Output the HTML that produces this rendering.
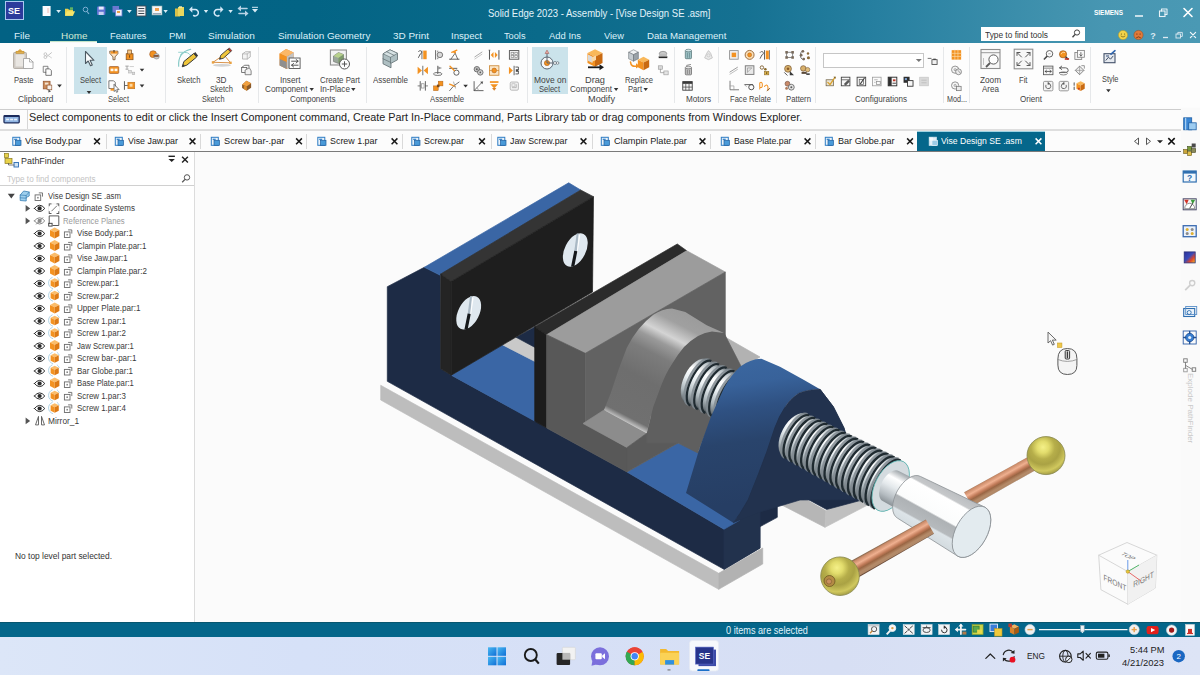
<!DOCTYPE html>
<html lang="en"><head><meta charset="utf-8"><title>Solid Edge 2023 - Assembly - [Vise Design SE .asm]</title>
<style>
html,body{margin:0;padding:0;}
body{width:1200px;height:675px;overflow:hidden;position:relative;background:#fbfbfb;font-family:"Liberation Sans",sans-serif;}
.t{position:absolute;white-space:nowrap;transform-origin:0 50%;display:block;}
.r{position:absolute;}
svg{position:absolute;left:0;top:0;overflow:visible;}
</style></head><body>
<div class="r" style="left:0px;top:0px;width:1200px;height:43px;background:linear-gradient(90deg,#026284 0%,#036485 26%,#0a6a8a 45%,#157192 62%,#267fa0 73%,#4192ae 88%,#4796b2 92%,#4a99b4 100%);"></div>
<div class="r" style="left:0px;top:43px;width:1200px;height:64px;background:#fdfdfd;"></div>
<div class="r" style="left:0px;top:107px;width:1200px;height:24px;background:#fcfcfc;"></div>
<div class="r" style="left:0px;top:108.6px;width:1200px;height:1.8000000000000114px;background:#cdcdcd;"></div>
<div class="r" style="left:27px;top:110.4px;width:1px;height:18.19999999999999px;background:#d6d6d6;"></div>
<div class="r" style="left:0px;top:128.6px;width:1200px;height:2.0px;background:#dedede;"></div>
<div class="r" style="left:0px;top:130.6px;width:1181px;height:21.400000000000006px;background:#fcfcfc;"></div>
<div class="r" style="left:0px;top:151px;width:1181px;height:1px;background:#7a7a7a;"></div>
<div class="r" style="left:1181px;top:108px;width:19px;height:513.5px;background:#fafafa;"></div>
<div class="r" style="left:0px;top:152px;width:195px;height:469.5px;background:#ffffff;"></div>
<div class="r" style="left:194px;top:152px;width:1px;height:469.5px;background:#dcdcdc;"></div>
<div class="r" style="left:0px;top:185px;width:194px;height:1px;background:#d0d0d0;"></div>
<div class="r" style="left:0px;top:621.5px;width:1200px;height:15.799999999999955px;background:#04668a;"></div>
<div class="r" style="left:0px;top:621.5px;width:1200px;height:1.0px;background:#07566f;"></div>
<div class="r" style="left:0px;top:637.3px;width:1200px;height:37.700000000000045px;background:linear-gradient(90deg,#dce6f8 0%,#d6e1f8 25%,#d7dff4 70%,#dde4f6 100%);"></div>
<div class="r" style="left:5px;top:1px;width:19px;height:19px;background:#2c3b9c;border:1px solid #a9c8f0;box-sizing:border-box;"></div>
<span class="t" style="left:8.0px;top:5.5px;font-size:9px;line-height:11px;color:#fff;font-weight:bold;transform:scaleX(0.999);">SE</span>
<span class="t" style="left:488.0px;top:6.5px;font-size:11px;line-height:13px;color:#e2f3fa;transform:scaleX(0.867);">Solid Edge 2023 - Assembly - [Vise Design SE .asm]</span>
<span class="t" style="left:1094.0px;top:8.5px;font-size:7px;line-height:8px;color:#fff;font-weight:bold;transform:scaleX(0.920);">SIEMENS</span>
<span class="t" style="left:14.0px;top:29.7px;font-size:9.7px;line-height:12px;color:#dcf0f9;transform:scaleX(1.024);">File</span>
<span class="t" style="left:61.0px;top:29.7px;font-size:9.7px;line-height:12px;color:#d3ecd4;transform:scaleX(1.024);">Home</span>
<span class="t" style="left:109.5px;top:29.7px;font-size:9.7px;line-height:12px;color:#dcf0f9;transform:scaleX(0.954);">Features</span>
<span class="t" style="left:169.0px;top:29.7px;font-size:9.7px;line-height:12px;color:#dcf0f9;transform:scaleX(0.986);">PMI</span>
<span class="t" style="left:208.0px;top:29.7px;font-size:9.7px;line-height:12px;color:#dcf0f9;transform:scaleX(1.038);">Simulation</span>
<span class="t" style="left:277.5px;top:29.7px;font-size:9.7px;line-height:12px;color:#dcf0f9;transform:scaleX(1.021);">Simulation Geometry</span>
<span class="t" style="left:392.5px;top:29.7px;font-size:9.7px;line-height:12px;color:#dcf0f9;transform:scaleX(1.027);">3D Print</span>
<span class="t" style="left:450.5px;top:29.7px;font-size:9.7px;line-height:12px;color:#dcf0f9;transform:scaleX(0.991);">Inspect</span>
<span class="t" style="left:504.0px;top:29.7px;font-size:9.7px;line-height:12px;color:#dcf0f9;transform:scaleX(0.950);">Tools</span>
<span class="t" style="left:548.5px;top:29.7px;font-size:9.7px;line-height:12px;color:#dcf0f9;transform:scaleX(0.973);">Add Ins</span>
<span class="t" style="left:604.0px;top:29.7px;font-size:9.7px;line-height:12px;color:#dcf0f9;transform:scaleX(0.959);">View</span>
<span class="t" style="left:647.0px;top:29.7px;font-size:9.7px;line-height:12px;color:#dcf0f9;transform:scaleX(0.996);">Data Management</span>
<div class="r" style="left:50px;top:41px;width:47px;height:1px;background:#c4e4c8;"></div>
<div class="r" style="left:50px;top:42px;width:47px;height:1px;background:#f8f9fa;"></div>
<div class="r" style="left:981px;top:27px;width:104px;height:14px;background:#ffffff;"></div>
<span class="t" style="left:984.5px;top:29.5px;font-size:8.5px;line-height:10px;color:#333;transform:scaleX(0.980);">Type to find tools</span>
<div class="r" style="left:74px;top:47px;width:33px;height:47px;background:#cbe3eb;"></div>
<div class="r" style="left:532px;top:47px;width:36px;height:47px;background:#cbe3eb;"></div>
<span class="t" style="left:13.5px;top:75.0px;font-size:8.6px;line-height:10px;color:#444444;transform:scaleX(0.887);">Paste</span>
<span class="t" style="left:18.0px;top:94.0px;font-size:8.6px;line-height:10px;color:#444444;transform:scaleX(0.964);">Clipboard</span>
<span class="t" style="left:79.5px;top:75.0px;font-size:8.6px;line-height:10px;color:#444444;transform:scaleX(0.879);">Select</span>
<span class="t" style="left:108.0px;top:94.0px;font-size:8.6px;line-height:10px;color:#444444;transform:scaleX(0.879);">Select</span>
<span class="t" style="left:177.0px;top:75.0px;font-size:8.6px;line-height:10px;color:#444444;transform:scaleX(0.894);">Sketch</span>
<span class="t" style="left:216.0px;top:75.0px;font-size:8.6px;line-height:10px;color:#444444;transform:scaleX(0.955);">3D</span>
<span class="t" style="left:210.0px;top:84.0px;font-size:8.6px;line-height:10px;color:#444444;transform:scaleX(0.875);">Sketch</span>
<span class="t" style="left:201.5px;top:94.0px;font-size:8.6px;line-height:10px;color:#444444;transform:scaleX(0.856);">Sketch</span>
<span class="t" style="left:279.5px;top:75.0px;font-size:8.6px;line-height:10px;color:#444444;transform:scaleX(0.953);">Insert</span>
<span class="t" style="left:265.1px;top:84.0px;font-size:8.6px;line-height:10px;color:#444444;transform:scaleX(0.956);">Component</span>
<span class="t" style="left:320.0px;top:75.0px;font-size:8.6px;line-height:10px;color:#444444;transform:scaleX(0.910);">Create Part</span>
<span class="t" style="left:320.0px;top:84.0px;font-size:8.6px;line-height:10px;color:#444444;transform:scaleX(0.951);">In-Place</span>
<span class="t" style="left:289.5px;top:94.0px;font-size:8.6px;line-height:10px;color:#444444;transform:scaleX(0.933);">Components</span>
<span class="t" style="left:373.0px;top:75.0px;font-size:8.6px;line-height:10px;color:#444444;transform:scaleX(0.927);">Assemble</span>
<span class="t" style="left:430.0px;top:94.0px;font-size:8.6px;line-height:10px;color:#444444;transform:scaleX(0.900);">Assemble</span>
<span class="t" style="left:534.0px;top:75.0px;font-size:8.6px;line-height:10px;color:#444444;transform:scaleX(0.985);">Move on</span>
<span class="t" style="left:539.0px;top:84.0px;font-size:8.6px;line-height:10px;color:#444444;transform:scaleX(0.879);">Select</span>
<span class="t" style="left:585.0px;top:75.0px;font-size:8.6px;line-height:10px;color:#444444;transform:scaleX(1.073);">Drag</span>
<span class="t" style="left:570.3px;top:84.0px;font-size:8.6px;line-height:10px;color:#444444;transform:scaleX(0.945);">Component</span>
<span class="t" style="left:588.0px;top:94.0px;font-size:8.6px;line-height:10px;color:#444444;transform:scaleX(1.066);">Modify</span>
<span class="t" style="left:624.5px;top:75.0px;font-size:8.6px;line-height:10px;color:#444444;transform:scaleX(0.887);">Replace</span>
<span class="t" style="left:628.0px;top:84.0px;font-size:8.6px;line-height:10px;color:#444444;transform:scaleX(0.888);">Part</span>
<span class="t" style="left:686.0px;top:94.0px;font-size:8.6px;line-height:10px;color:#444444;transform:scaleX(0.951);">Motors</span>
<span class="t" style="left:729.5px;top:94.0px;font-size:8.6px;line-height:10px;color:#444444;transform:scaleX(0.884);">Face Relate</span>
<span class="t" style="left:785.5px;top:94.0px;font-size:8.6px;line-height:10px;color:#444444;transform:scaleX(0.902);">Pattern</span>
<span class="t" style="left:855.0px;top:94.0px;font-size:8.6px;line-height:10px;color:#444444;transform:scaleX(0.938);">Configurations</span>
<span class="t" style="left:947.0px;top:94.0px;font-size:8.6px;line-height:10px;color:#444444;transform:scaleX(0.837);">Mod...</span>
<span class="t" style="left:980.0px;top:75.0px;font-size:8.6px;line-height:10px;color:#444444;transform:scaleX(0.955);">Zoom</span>
<span class="t" style="left:982.0px;top:84.0px;font-size:8.6px;line-height:10px;color:#444444;transform:scaleX(0.936);">Area</span>
<span class="t" style="left:1019.0px;top:75.0px;font-size:8.6px;line-height:10px;color:#444444;transform:scaleX(0.890);">Fit</span>
<span class="t" style="left:1019.5px;top:94.0px;font-size:8.6px;line-height:10px;color:#444444;transform:scaleX(0.939);">Orient</span>
<span class="t" style="left:1101.5px;top:74.0px;font-size:8.6px;line-height:10px;color:#444444;transform:scaleX(0.863);">Style</span>
<div class="r" style="left:66px;top:47px;width:1px;height:56px;background:#e6e8ea;"></div>
<div class="r" style="left:165px;top:47px;width:1px;height:56px;background:#e6e8ea;"></div>
<div class="r" style="left:258px;top:47px;width:1px;height:56px;background:#e6e8ea;"></div>
<div class="r" style="left:366px;top:47px;width:1px;height:56px;background:#e6e8ea;"></div>
<div class="r" style="left:527px;top:47px;width:1px;height:56px;background:#e6e8ea;"></div>
<div class="r" style="left:674px;top:47px;width:1px;height:56px;background:#e6e8ea;"></div>
<div class="r" style="left:718px;top:47px;width:1px;height:56px;background:#e6e8ea;"></div>
<div class="r" style="left:776px;top:47px;width:1px;height:56px;background:#e6e8ea;"></div>
<div class="r" style="left:815px;top:47px;width:1px;height:56px;background:#e6e8ea;"></div>
<div class="r" style="left:943px;top:47px;width:1px;height:56px;background:#e6e8ea;"></div>
<div class="r" style="left:969px;top:47px;width:1px;height:56px;background:#e6e8ea;"></div>
<div class="r" style="left:1090px;top:47px;width:1px;height:56px;background:#e6e8ea;"></div>
<div class="r" style="left:823px;top:53px;width:101px;height:15px;background:#ffffff;border:1px solid #c6c6c6;box-sizing:border-box;"></div>
<span class="t" style="left:28.5px;top:111.1px;font-size:10.9px;line-height:13px;color:#222;transform:scaleX(0.991);">Select components to edit or click the Insert Component command, Create Part In-Place command, Parts Library tab or drag components from Windows Explorer.</span>
<div class="r" style="left:917px;top:131.4px;width:127.5px;height:20.0px;background:#05678b;"></div>
<div class="r" style="left:917px;top:131.4px;width:127.5px;height:0.799999999999983px;background:#9fd3e2;"></div>
<span class="t" style="left:25.0px;top:136.0px;font-size:9.2px;line-height:11px;color:#222;transform:scaleX(1.001);">Vise Body.par</span>
<span class="t" style="left:127.5px;top:136.0px;font-size:9.2px;line-height:11px;color:#222;transform:scaleX(0.962);">Vise Jaw.par</span>
<span class="t" style="left:223.5px;top:136.0px;font-size:9.2px;line-height:11px;color:#222;transform:scaleX(1.003);">Screw bar-.par</span>
<span class="t" style="left:330.0px;top:136.0px;font-size:9.2px;line-height:11px;color:#222;transform:scaleX(0.968);">Screw 1.par</span>
<span class="t" style="left:424.0px;top:136.0px;font-size:9.2px;line-height:11px;color:#222;transform:scaleX(0.978);">Screw.par</span>
<span class="t" style="left:510.0px;top:136.0px;font-size:9.2px;line-height:11px;color:#222;transform:scaleX(0.961);">Jaw Screw.par</span>
<span class="t" style="left:613.5px;top:136.0px;font-size:9.2px;line-height:11px;color:#222;transform:scaleX(0.998);">Clampin Plate.par</span>
<span class="t" style="left:733.5px;top:136.0px;font-size:9.2px;line-height:11px;color:#222;transform:scaleX(0.953);">Base Plate.par</span>
<span class="t" style="left:837.5px;top:136.0px;font-size:9.2px;line-height:11px;color:#222;transform:scaleX(0.987);">Bar Globe.par</span>
<span class="t" style="left:941.0px;top:136.0px;font-size:9.2px;line-height:11px;color:#fff;transform:scaleX(0.939);">Vise Design SE .asm</span>
<div class="r" style="left:106px;top:134px;width:1px;height:15px;background:#d9d9d9;"></div>
<div class="r" style="left:200px;top:134px;width:1px;height:15px;background:#d9d9d9;"></div>
<div class="r" style="left:306px;top:134px;width:1px;height:15px;background:#d9d9d9;"></div>
<div class="r" style="left:402px;top:134px;width:1px;height:15px;background:#d9d9d9;"></div>
<div class="r" style="left:491px;top:134px;width:1px;height:15px;background:#d9d9d9;"></div>
<div class="r" style="left:592px;top:134px;width:1px;height:15px;background:#d9d9d9;"></div>
<div class="r" style="left:710px;top:134px;width:1px;height:15px;background:#d9d9d9;"></div>
<div class="r" style="left:815px;top:134px;width:1px;height:15px;background:#d9d9d9;"></div>
<span class="t" style="left:21.3px;top:154.9px;font-size:9.5px;line-height:11px;color:#333;transform:scaleX(0.938);">PathFinder</span>
<span class="t" style="left:7.0px;top:173.7px;font-size:8.5px;line-height:10px;color:#c4c4c4;transform:scaleX(0.956);">Type to find components</span>
<span class="t" style="left:47.5px;top:191.0px;font-size:8.3px;line-height:10px;color:#3a3a3a;transform:scaleX(0.937);">Vise Design SE .asm</span>
<span class="t" style="left:62.7px;top:203.4px;font-size:8.3px;line-height:10px;color:#3a3a3a;transform:scaleX(0.963);">Coordinate Systems</span>
<span class="t" style="left:62.7px;top:215.9px;font-size:8.5px;line-height:10px;color:#9a9a9a;transform:scaleX(0.913);">Reference Planes</span>
<span class="t" style="left:76.9px;top:228.3px;font-size:8.3px;line-height:10px;color:#3a3a3a;transform:scaleX(0.968);">Vise Body.par:1</span>
<span class="t" style="left:76.9px;top:240.8px;font-size:8.3px;line-height:10px;color:#3a3a3a;transform:scaleX(0.951);">Clampin Plate.par:1</span>
<span class="t" style="left:76.9px;top:253.3px;font-size:8.3px;line-height:10px;color:#3a3a3a;transform:scaleX(0.940);">Vise Jaw.par:1</span>
<span class="t" style="left:76.9px;top:265.8px;font-size:8.3px;line-height:10px;color:#3a3a3a;transform:scaleX(0.958);">Clampin Plate.par:2</span>
<span class="t" style="left:76.9px;top:278.3px;font-size:8.3px;line-height:10px;color:#3a3a3a;transform:scaleX(0.954);">Screw.par:1</span>
<span class="t" style="left:76.9px;top:290.8px;font-size:8.3px;line-height:10px;color:#3a3a3a;transform:scaleX(0.954);">Screw.par:2</span>
<span class="t" style="left:76.9px;top:303.3px;font-size:8.3px;line-height:10px;color:#3a3a3a;transform:scaleX(0.976);">Upper Plate.par:1</span>
<span class="t" style="left:76.9px;top:315.8px;font-size:8.3px;line-height:10px;color:#3a3a3a;transform:scaleX(0.955);">Screw 1.par:1</span>
<span class="t" style="left:76.9px;top:328.3px;font-size:8.3px;line-height:10px;color:#3a3a3a;transform:scaleX(0.955);">Screw 1.par:2</span>
<span class="t" style="left:76.9px;top:340.8px;font-size:8.3px;line-height:10px;color:#3a3a3a;transform:scaleX(0.934);">Jaw Screw.par:1</span>
<span class="t" style="left:76.9px;top:353.3px;font-size:8.3px;line-height:10px;color:#3a3a3a;transform:scaleX(0.970);">Screw bar-.par:1</span>
<span class="t" style="left:76.9px;top:365.8px;font-size:8.3px;line-height:10px;color:#3a3a3a;transform:scaleX(0.956);">Bar Globe.par:1</span>
<span class="t" style="left:76.9px;top:378.3px;font-size:8.3px;line-height:10px;color:#3a3a3a;transform:scaleX(0.927);">Base Plate.par:1</span>
<span class="t" style="left:76.9px;top:390.8px;font-size:8.3px;line-height:10px;color:#3a3a3a;transform:scaleX(0.955);">Screw 1.par:3</span>
<span class="t" style="left:76.9px;top:403.3px;font-size:8.3px;line-height:10px;color:#3a3a3a;transform:scaleX(0.955);">Screw 1.par:4</span>
<span class="t" style="left:48.0px;top:415.9px;font-size:8.3px;line-height:10px;color:#3a3a3a;transform:scaleX(1.007);">Mirror_1</span>
<span class="t" style="left:15.0px;top:550.5px;font-size:8.5px;line-height:10px;color:#333;transform:scaleX(0.987);">No top level part selected.</span>
<span class="t" style="left:725.5px;top:625.2px;font-size:10.2px;line-height:12px;color:#e0f3fa;transform:scaleX(0.898);">0 items are selected</span>
<span class="t" style="left:1027.0px;top:651.0px;font-size:9px;line-height:11px;color:#222;transform:scaleX(0.923);">ENG</span>
<span class="t" style="left:1129.5px;top:643.5px;font-size:9.5px;line-height:11px;color:#222;transform:scaleX(0.975);">5:44 PM</span>
<span class="t" style="left:1122.0px;top:656.5px;font-size:9.5px;line-height:11px;color:#222;transform:scaleX(0.994);">4/21/2023</span>
<span class="t" style="left:1190px;top:373px;font-size:8px;line-height:10px;color:#c9c9c9;transform-origin:0 0;transform:rotate(90deg) translate(0,-50%);">Explode PathFinder</span>
<svg width="1200" height="675" viewBox="0 0 1200 675"><defs>
<linearGradient id="gThread" gradientUnits="userSpaceOnUse" x1="0" y1="-1" x2="0" y2="1">
<stop offset="0" stop-color="#2a2d30"/><stop offset="0.12" stop-color="#9aa3a8"/><stop offset="0.35" stop-color="#f4f7f8"/>
<stop offset="0.6" stop-color="#c9d0d3"/><stop offset="0.85" stop-color="#7c8489"/><stop offset="1" stop-color="#2a2d30"/></linearGradient>
<linearGradient id="gBoss" gradientUnits="userSpaceOnUse" x1="620" y1="420" x2="682" y2="300">
<stop offset="0" stop-color="#cfcfcf"/><stop offset="0.05" stop-color="#707070"/><stop offset="0.35" stop-color="#6e6e6e"/><stop offset="0.55" stop-color="#7c7c7c"/><stop offset="0.65" stop-color="#9a9a9a"/><stop offset="0.72" stop-color="#d4d4d4"/><stop offset="0.83" stop-color="#a0a0a0"/><stop offset="1" stop-color="#989898"/></linearGradient>
<linearGradient id="gBlock" gradientUnits="userSpaceOnUse" x1="740" y1="358" x2="760" y2="500">
<stop offset="0" stop-color="#3b67a0"/><stop offset="0.18" stop-color="#38629a"/><stop offset="0.35" stop-color="#2f5182"/><stop offset="0.58" stop-color="#29446c"/><stop offset="1" stop-color="#263e64"/></linearGradient>
<linearGradient id="gCopperA" gradientUnits="userSpaceOnUse" x1="0" y1="-1" x2="0" y2="1">
<stop offset="0" stop-color="#8a4a2c"/><stop offset="0.3" stop-color="#e39a72"/><stop offset="0.55" stop-color="#c9754a"/><stop offset="1" stop-color="#7d3f25"/></linearGradient>
<radialGradient id="gGold" cx="0.42" cy="0.28" r="0.78"><stop offset="0" stop-color="#f4f088"/><stop offset="0.2" stop-color="#e2dc6c"/><stop offset="0.4" stop-color="#b6ae4a"/><stop offset="0.58" stop-color="#aaa244"/><stop offset="0.8" stop-color="#d0c85e"/><stop offset="1" stop-color="#8e8838"/></radialGradient>
<linearGradient id="gHead" gradientUnits="userSpaceOnUse" x1="945" y1="480" x2="925" y2="540">
<stop offset="0" stop-color="#b8bcc0"/><stop offset="0.25" stop-color="#fbfcfc"/><stop offset="0.5" stop-color="#d5dadd"/><stop offset="0.8" stop-color="#e9eef0"/><stop offset="1" stop-color="#aeb4b8"/></linearGradient>
<linearGradient id="gShaft" gradientUnits="userSpaceOnUse" x1="905" y1="470" x2="885" y2="510">
<stop offset="0" stop-color="#a9aeb2"/><stop offset="0.3" stop-color="#ffffff"/><stop offset="0.6" stop-color="#d0d5d8"/><stop offset="1" stop-color="#8e9498"/></linearGradient>
</defs>
<polygon points="380.7,385.3 387.3,381.3 724.0,569.3 762.7,548.0 762.7,549.0 718.7,573.3" fill="#fbfbfb"  stroke="#fbfbfb" stroke-width="0.7" stroke-linejoin="round"/>
<polygon points="380.7,385.3 718.7,573.3 718.7,589.3 380.7,400.0" fill="#bdbdbd"  stroke="#bdbdbd" stroke-width="0.7" stroke-linejoin="round"/>
<polygon points="718.7,573.3 762.7,548.0 762.7,564.0 718.7,589.3" fill="#b2b2b2"  stroke="#b2b2b2" stroke-width="0.7" stroke-linejoin="round"/>
<polygon points="776.0,498.0 792.0,490.2 826.0,509.5 825.0,527.3 776.0,502.0" fill="#b6b6b6"  stroke="#b6b6b6" stroke-width="0.7" stroke-linejoin="round"/>
<polygon points="826.0,509.5 882.0,482.5 882.0,497.5 825.0,527.3" fill="#c0c0c0"  stroke="#c0c0c0" stroke-width="0.7" stroke-linejoin="round"/>
<path d="M792,490.4 L826,509.7 L882,482.7" fill="none" stroke="#f6f6f6" stroke-width="1.3"/>
<polygon points="387.3,286.7 424.3,267.3 440.3,275.3 440.7,368.8 451.3,375.2 534.0,420.6 546.7,428.0 627.0,472.0 724.0,529.3 740.0,513.0 761.0,420.0 820.0,389.3 833.3,406.7 844.0,428.0 864.0,499.5 826.7,509.5 792.0,490.7 777.3,500.0 777.3,517.3 760.0,526.7 760.0,548.0 724.0,569.3 387.3,381.3" fill="#1d2b45"  stroke="#1d2b45" stroke-width="0.7" stroke-linejoin="round"/>
<polygon points="724.0,529.3 733.3,522.7 760.0,510.0 760.0,548.0 724.0,569.3" fill="#22324d"  stroke="#22324d" stroke-width="0.7" stroke-linejoin="round"/>
<polygon points="424.3,267.3 568.7,182.8 580.7,190.0 440.3,275.3" fill="#3a66a5"  stroke="#3a66a5" stroke-width="0.7" stroke-linejoin="round"/>
<polygon points="451.3,375.2 502.5,344.8 535.5,361.8 535.5,421.5" fill="#3a66a5"  stroke="#3a66a5" stroke-width="0.7" stroke-linejoin="round"/>
<polygon points="516.1,337.3 535.5,347.7 535.5,361.8 502.5,344.8" fill="#c9c9c9"  stroke="#c9c9c9" stroke-width="0.7" stroke-linejoin="round"/>
<polygon points="516.1,337.3 535.5,326.5 535.5,347.7" fill="#1d2b45"  stroke="#1d2b45" stroke-width="0.7" stroke-linejoin="round"/>
<polygon points="440.7,274.0 580.7,190.0 593.5,196.7 451.3,281.5" fill="#343434"  stroke="#343434" stroke-width="0.7" stroke-linejoin="round"/>
<polygon points="440.7,274.0 451.3,281.5 451.3,375.2 440.7,368.8" fill="#242424"  stroke="#242424" stroke-width="0.7" stroke-linejoin="round"/>
<polygon points="451.3,281.5 593.5,196.7 592.5,292.0 451.3,375.2" fill="#1e1e1e"  stroke="#1e1e1e" stroke-width="0.7" stroke-linejoin="round"/>
<g transform="translate(468.7,312.7)"><ellipse rx="10.5" ry="18" transform="rotate(27)" fill="#dfe8ef"/><g transform="rotate(9)"><path d="M-1.2,-16.5 L0.6,-16.8 L1.8,2 L-0.8,2 Z" fill="#a9b8c4"/><path d="M1.2,-16 L2.6,-15 L2.6,2 L1.8,2 Z" fill="#ffffff"/><path d="M-0.9,1 L2.2,1 L1.6,16.5 L-1.6,17 Z" fill="#15181b"/></g></g>
<g transform="translate(575.3,250)"><ellipse rx="10.5" ry="18" transform="rotate(27)" fill="#dfe8ef"/><g transform="rotate(9)"><path d="M-1.2,-16.5 L0.6,-16.8 L1.8,2 L-0.8,2 Z" fill="#a9b8c4"/><path d="M1.2,-16 L2.6,-15 L2.6,2 L1.8,2 Z" fill="#ffffff"/><path d="M-0.9,1 L2.2,1 L1.6,16.5 L-1.6,17 Z" fill="#15181b"/></g></g>
<polygon points="627.0,472.0 678.0,443.0 702.0,453.0 700.0,490.0 740.0,520.0 724.0,529.3" fill="#3a66a5"  stroke="#3a66a5" stroke-width="0.7" stroke-linejoin="round"/>
<polygon points="725.0,337.0 760.0,357.0 748.0,364.0 741.3,367.5 725.0,346.0" fill="#b2b2b2"  stroke="#b2b2b2" stroke-width="0.7" stroke-linejoin="round"/>
<polygon points="534.7,326.7 677.3,244.0 686.7,250.7 546.7,334.7" fill="#2b2b2b"  stroke="#2b2b2b" stroke-width="0.7" stroke-linejoin="round"/>
<polygon points="534.7,326.7 546.7,334.7 546.7,428.0 534.7,421.3" fill="#1c1c1c"  stroke="#1c1c1c" stroke-width="0.7" stroke-linejoin="round"/>
<polygon points="546.7,334.7 686.7,250.7 725.3,272.0 585.3,353.3" fill="#9c9c9c"  stroke="#9c9c9c" stroke-width="0.7" stroke-linejoin="round"/>
<polygon points="546.7,334.7 585.3,353.3 585.3,424.0 627.0,447.5 627.0,472.0 546.7,428.0" fill="#585858"  stroke="#585858" stroke-width="0.7" stroke-linejoin="round"/>
<polygon points="585.3,353.3 725.3,272.0 725.3,345.0 700.0,420.0 605.3,410.7 585.3,424.0" fill="#626262"  stroke="#626262" stroke-width="0.7" stroke-linejoin="round"/>
<polygon points="583.0,423.5 604.0,410.0 646.7,433.3 627.0,447.5" fill="#8c8c8c"  stroke="#8c8c8c" stroke-width="0.7" stroke-linejoin="round"/>
<polygon points="627.0,447.5 646.7,433.3 678.0,443.0 627.0,472.0" fill="#5a5a5a"  stroke="#5a5a5a" stroke-width="0.7" stroke-linejoin="round"/>
<path d="M646.7,433.3 L653.3,406.7 L661.3,385.3 Q666,373 672,364 Q678,354 684,347 Q691,340 698,336 Q705,332 712,331.5 L724,333 L741.3,366.7 L724,388 L700,446.7 L698,453 L678,443 L646.7,443 Z" fill="#5f5f5f"  stroke="#5f5f5f" stroke-width="0.7" stroke-linejoin="round"/>
<path d="M604,410 L610.7,393.3 L618.7,369.3 L626.7,348 Q637,327 653.3,314.7 Q662,309 672,308.5 L685.3,312 L706.7,325.3 L724,333 L712,331.5 Q705,332 698,336 Q691,340 684,347 Q678,354 672,364 Q666,373 661.3,385.3 L653.3,406.7 L646.7,433.3 Z" fill="url(#gBoss)" />
<defs><linearGradient id="gc1" gradientUnits="userSpaceOnUse" x1="0" y1="-25.5" x2="0" y2="25.5"><stop offset="0" stop-color="#4c5358"/><stop offset="0.1" stop-color="#b9c2c7"/><stop offset="0.3" stop-color="#ffffff"/><stop offset="0.5" stop-color="#e9eff2"/><stop offset="0.75" stop-color="#aeb8bd"/><stop offset="0.92" stop-color="#6f787d"/><stop offset="1" stop-color="#3c4246"/></linearGradient></defs>
<g transform="translate(697.0,381.5) rotate(25.35)">
<path d="M0,-24.5 L42.0,-25.5 A14.3,25.5 0 0 1 42.0,25.5 L0,24.5 A13.7,24.5 0 0 1 0,-24.5 Z" fill="url(#gc1)" />
<path d="M1.9,-24.6 A10.3,24.6 0 0 0 1.9,24.6" fill="none" stroke="#808990" stroke-opacity="0.85" stroke-width="2.8"/>
<path d="M4.2,-24.6 A10.3,24.6 0 0 0 4.2,24.6" fill="none" stroke="#1f2a30" stroke-width="2.2"/>
<path d="M10.3,-24.8 A10.4,24.8 0 0 0 10.3,24.8" fill="none" stroke="#808990" stroke-opacity="0.85" stroke-width="2.8"/>
<path d="M12.6,-24.8 A10.4,24.8 0 0 0 12.6,24.8" fill="none" stroke="#1f2a30" stroke-width="2.2"/>
<path d="M18.7,-25.0 A10.5,25.0 0 0 0 18.7,25.0" fill="none" stroke="#808990" stroke-opacity="0.85" stroke-width="2.8"/>
<path d="M21.0,-25.0 A10.5,25.0 0 0 0 21.0,25.0" fill="none" stroke="#1f2a30" stroke-width="2.2"/>
<path d="M27.1,-25.2 A10.6,25.2 0 0 0 27.1,25.2" fill="none" stroke="#808990" stroke-opacity="0.85" stroke-width="2.8"/>
<path d="M29.4,-25.2 A10.6,25.2 0 0 0 29.4,25.2" fill="none" stroke="#1f2a30" stroke-width="2.2"/>
<path d="M35.5,-25.4 A10.7,25.4 0 0 0 35.5,25.4" fill="none" stroke="#808990" stroke-opacity="0.85" stroke-width="2.8"/>
<path d="M37.8,-25.4 A10.7,25.4 0 0 0 37.8,25.4" fill="none" stroke="#1f2a30" stroke-width="2.2"/>
</g>
<path d="M686,493 L700,446.7 L710.7,417.3 L724,388 Q731,375 740,366.7 Q750,359 761.3,358.7 L780,366.7 L804,380 L820,389.3 Q806,390 798.7,393.3 Q790,399 785.3,406.7 Q779,416 774.7,428 L766.7,452 L758.7,473.3 L748,500 L740,513.3 L733.3,522.7 Z" fill="url(#gBlock)" />
<path d="M820,389.3 Q806,390 798.7,393.3 Q790,399 785.3,406.7 Q779,416 774.7,428 L766.7,452 L758.7,473.3 L748,500 L740,513.3 L733.3,522.7 L760,512 L800,500 L864,499.5 L844,428 L833.3,406.7 Z" fill="#22324e"  stroke="#22324e" stroke-width="0.7" stroke-linejoin="round"/>
<defs><linearGradient id="gc2" gradientUnits="userSpaceOnUse" x1="0" y1="-27.5" x2="0" y2="27.5"><stop offset="0" stop-color="#4c5358"/><stop offset="0.1" stop-color="#b9c2c7"/><stop offset="0.3" stop-color="#ffffff"/><stop offset="0.5" stop-color="#e9eff2"/><stop offset="0.75" stop-color="#aeb8bd"/><stop offset="0.92" stop-color="#6f787d"/><stop offset="1" stop-color="#3c4246"/></linearGradient></defs>
<g transform="translate(795.0,435.5) rotate(27.82)">
<path d="M0,-24.2 L108.2,-27.5 A15.4,27.5 0 0 1 108.2,27.5 L0,24.2 A13.6,24.2 0 0 1 0,-24.2 Z" fill="url(#gc2)" />
<path d="M1.1,-24.3 A10.2,24.3 0 0 0 1.1,24.3" fill="none" stroke="#808990" stroke-opacity="0.85" stroke-width="2.8"/>
<path d="M3.4,-24.3 A10.2,24.3 0 0 0 3.4,24.3" fill="none" stroke="#1f2a30" stroke-width="2.3"/>
<path d="M7.8,-24.5 A10.3,24.5 0 0 0 7.8,24.5" fill="none" stroke="#808990" stroke-opacity="0.85" stroke-width="2.8"/>
<path d="M10.1,-24.5 A10.3,24.5 0 0 0 10.1,24.5" fill="none" stroke="#1f2a30" stroke-width="2.3"/>
<path d="M14.6,-24.7 A10.4,24.7 0 0 0 14.6,24.7" fill="none" stroke="#808990" stroke-opacity="0.85" stroke-width="2.8"/>
<path d="M16.9,-24.7 A10.4,24.7 0 0 0 16.9,24.7" fill="none" stroke="#1f2a30" stroke-width="2.3"/>
<path d="M21.4,-24.9 A10.5,24.9 0 0 0 21.4,24.9" fill="none" stroke="#808990" stroke-opacity="0.85" stroke-width="2.8"/>
<path d="M23.7,-24.9 A10.5,24.9 0 0 0 23.7,24.9" fill="none" stroke="#1f2a30" stroke-width="2.3"/>
<path d="M28.1,-25.1 A10.6,25.1 0 0 0 28.1,25.1" fill="none" stroke="#808990" stroke-opacity="0.85" stroke-width="2.8"/>
<path d="M30.4,-25.1 A10.6,25.1 0 0 0 30.4,25.1" fill="none" stroke="#1f2a30" stroke-width="2.3"/>
<path d="M34.9,-25.3 A10.6,25.3 0 0 0 34.9,25.3" fill="none" stroke="#808990" stroke-opacity="0.85" stroke-width="2.8"/>
<path d="M37.2,-25.3 A10.6,25.3 0 0 0 37.2,25.3" fill="none" stroke="#1f2a30" stroke-width="2.3"/>
<path d="M41.7,-25.5 A10.7,25.5 0 0 0 41.7,25.5" fill="none" stroke="#808990" stroke-opacity="0.85" stroke-width="2.8"/>
<path d="M44.0,-25.5 A10.7,25.5 0 0 0 44.0,25.5" fill="none" stroke="#1f2a30" stroke-width="2.3"/>
<path d="M48.4,-25.7 A10.8,25.7 0 0 0 48.4,25.7" fill="none" stroke="#808990" stroke-opacity="0.85" stroke-width="2.8"/>
<path d="M50.7,-25.7 A10.8,25.7 0 0 0 50.7,25.7" fill="none" stroke="#1f2a30" stroke-width="2.3"/>
<path d="M55.2,-26.0 A10.9,26.0 0 0 0 55.2,26.0" fill="none" stroke="#808990" stroke-opacity="0.85" stroke-width="2.8"/>
<path d="M57.5,-26.0 A10.9,26.0 0 0 0 57.5,26.0" fill="none" stroke="#1f2a30" stroke-width="2.3"/>
<path d="M61.9,-26.2 A11.0,26.2 0 0 0 61.9,26.2" fill="none" stroke="#808990" stroke-opacity="0.85" stroke-width="2.8"/>
<path d="M64.2,-26.2 A11.0,26.2 0 0 0 64.2,26.2" fill="none" stroke="#1f2a30" stroke-width="2.3"/>
<path d="M68.7,-26.4 A11.1,26.4 0 0 0 68.7,26.4" fill="none" stroke="#808990" stroke-opacity="0.85" stroke-width="2.8"/>
<path d="M71.0,-26.4 A11.1,26.4 0 0 0 71.0,26.4" fill="none" stroke="#1f2a30" stroke-width="2.3"/>
<path d="M75.5,-26.6 A11.2,26.6 0 0 0 75.5,26.6" fill="none" stroke="#808990" stroke-opacity="0.85" stroke-width="2.8"/>
<path d="M77.8,-26.6 A11.2,26.6 0 0 0 77.8,26.6" fill="none" stroke="#1f2a30" stroke-width="2.3"/>
<path d="M82.2,-26.8 A11.2,26.8 0 0 0 82.2,26.8" fill="none" stroke="#808990" stroke-opacity="0.85" stroke-width="2.8"/>
<path d="M84.5,-26.8 A11.2,26.8 0 0 0 84.5,26.8" fill="none" stroke="#1f2a30" stroke-width="2.3"/>
<path d="M89.0,-27.0 A11.3,27.0 0 0 0 89.0,27.0" fill="none" stroke="#808990" stroke-opacity="0.85" stroke-width="2.8"/>
<path d="M91.3,-27.0 A11.3,27.0 0 0 0 91.3,27.0" fill="none" stroke="#1f2a30" stroke-width="2.3"/>
<path d="M95.8,-27.2 A11.4,27.2 0 0 0 95.8,27.2" fill="none" stroke="#808990" stroke-opacity="0.85" stroke-width="2.8"/>
<path d="M98.1,-27.2 A11.4,27.2 0 0 0 98.1,27.2" fill="none" stroke="#1f2a30" stroke-width="2.3"/>
<path d="M102.5,-27.4 A11.5,27.4 0 0 0 102.5,27.4" fill="none" stroke="#808990" stroke-opacity="0.85" stroke-width="2.8"/>
<path d="M104.8,-27.4 A11.5,27.4 0 0 0 104.8,27.4" fill="none" stroke="#1f2a30" stroke-width="2.3"/>
<ellipse cx="108.2" cy="0" rx="15.4" ry="27.5" fill="#d4dbdf" stroke="#5fb9b6" stroke-width="0.8"/>
</g>
<defs><linearGradient id="gc3" gradientUnits="userSpaceOnUse" x1="0" y1="-17.5" x2="0" y2="17.5"><stop offset="0" stop-color="#9aa1a6"/><stop offset="0.25" stop-color="#ffffff"/><stop offset="0.5" stop-color="#e4e9ec"/><stop offset="0.8" stop-color="#b4bbc0"/><stop offset="1" stop-color="#8a9196"/></linearGradient></defs>
<g transform="translate(890.7,486.0) rotate(28.36)">
<path d="M0,-17.0 L24.2,-17.5 A9.8,17.5 0 0 1 24.2,17.5 L0,17.0 A9.5,17.0 0 0 1 0,-17.0 Z" fill="url(#gc3)" />
</g>
<defs><linearGradient id="gCu" gradientUnits="userSpaceOnUse" x1="0" y1="-8.5" x2="0" y2="8.5"><stop offset="0" stop-color="#8a6a50"/><stop offset="0.08" stop-color="#c98a68"/><stop offset="0.3" stop-color="#efb090"/><stop offset="0.5" stop-color="#c07a58"/><stop offset="0.62" stop-color="#9a6644"/><stop offset="0.8" stop-color="#b48a68"/><stop offset="0.94" stop-color="#b08868"/><stop offset="1" stop-color="#6a4a38"/></linearGradient></defs>
<g transform="translate(968.0,499.2) rotate(-29.20)"><polygon points="0,-8.0 89.4,-7.5 89.4,7.5 0,8.0" fill="url(#gCu)"/></g>
<circle cx="1046" cy="455.6" r="19" fill="url(#gGold)" stroke="#86864e" stroke-width="0.8"/>
<defs><linearGradient id="gc4" gradientUnits="userSpaceOnUse" x1="0" y1="-28" x2="0" y2="28"><stop offset="0" stop-color="#b9bcbf"/><stop offset="0.16" stop-color="#c6c8ca"/><stop offset="0.19" stop-color="#ffffff"/><stop offset="0.54" stop-color="#fbfcfc"/><stop offset="0.57" stop-color="#aeb2b5"/><stop offset="0.76" stop-color="#b6babd"/><stop offset="0.79" stop-color="#dde4e8"/><stop offset="1" stop-color="#d2dade"/></linearGradient></defs>
<g transform="translate(909.0,497.3) rotate(28.90)">
<path d="M0,-23.8 L71.4,-28.0 A15.7,28.0 0 0 1 71.4,28.0 L0,23.8 A13.3,23.8 0 0 1 0,-23.8 Z" fill="url(#gc4)" stroke="#8a9094" stroke-width="0.7"/>
<ellipse cx="71.4" cy="0" rx="15.7" ry="28.0" fill="#e3ebef" stroke="#8a9094" stroke-width="0.8"/>
</g>
<g transform="translate(840.0,577.5) rotate(-29.54)"><polygon points="0,-9.2 103.4,-8.2 103.4,8.2 0,9.2" fill="url(#gCu)"/></g>
<circle cx="840" cy="576.2" r="19.3" fill="url(#gGold)" stroke="#86864e" stroke-width="0.8"/>
<circle cx="829.5" cy="581" r="5.5" fill="#b48a45" stroke="#6f5a22" stroke-width="0.8"/><circle cx="829" cy="581.5" r="2.6" fill="#c98f5e" stroke="#7a5a2a" stroke-width="0.6"/></svg>
<svg width="1200" height="675" viewBox="0 0 1200 675"><g transform="translate(46.6,11.0) scale(1)"><rect x="-4" y="-5" width="8" height="10" fill="#fbfbfd"/><rect x="0.5" y="-3" width="2" height="5" fill="#f6d9d6"/></g>
<polygon points="56.2,10.0 61.0,10.0 58.6,12.9" fill="#d8ecf6"/>
<g transform="translate(70.0,11.8) scale(1)"><polygon points="-5,4 -5,-3 -2,-3 -1,-2 3,-2 3,4" fill="#e9d24f"/><polygon points="-5,4 -3,-0.5 5,-0.5 3,4" fill="#f5e56b"/><rect x="0" y="-4.5" width="3" height="2.5" fill="#63b463"/></g>
<g transform="translate(86.0,10.5) scale(1)"><circle cx="-0.5" cy="-1" r="2.3" fill="none" stroke="#7fb0d4" stroke-width="1"/><line x1="1" y1="1" x2="3" y2="3.5" stroke="#7fb0d4" stroke-width="1.2"/></g>
<g transform="translate(101.2,10.8) scale(1)"><rect x="-4.2" y="-4.2" width="8.4" height="8.4" fill="#5f72d2" rx="1"/><rect x="-2.5" y="-4.2" width="5" height="3" fill="#e8ecfa"/><rect x="-2.5" y="1" width="5" height="3.2" fill="#c9d1f3"/></g>
<g transform="translate(117.0,11.0) scale(1)"><rect x="-4.5" y="-5" width="6.5" height="6.5" fill="#6a78cf"/><rect x="-1.5" y="-1.5" width="6.5" height="6.5" fill="#eef2fb" stroke="#6a78cf" stroke-width="0.8"/><rect x="0" y="0" width="3" height="2" fill="#e8a04a"/></g>
<polygon points="127.0,10.0 131.8,10.0 129.4,12.9" fill="#d8ecf6"/>
<g transform="translate(141.3,11.0) scale(1)"><rect x="-4.6" y="-5" width="9.2" height="10" fill="#f4f6f8" stroke="#3e4a55" stroke-width="0.9"/><line x1="-3" y1="-2.5" x2="3" y2="-2.5" stroke="#3e4a55" stroke-width="1"/><line x1="-3" y1="0" x2="3" y2="0" stroke="#3e4a55" stroke-width="1"/><line x1="-3" y1="2.5" x2="3" y2="2.5" stroke="#3e4a55" stroke-width="1"/></g>
<g transform="translate(157.0,11.0) scale(1)"><rect x="-5" y="-5" width="10" height="9" fill="#f4f6f8" stroke="#8aa" stroke-width="0.6"/><rect x="-2" y="-3" width="4" height="3" fill="#f0a050"/><rect x="-4" y="2" width="8" height="1.5" fill="#9ab"/></g>
<polygon points="163.4,10.0 167.8,10.0 165.6,12.9" fill="#d8ecf6"/>
<g transform="translate(179.5,11.5) scale(1)"><rect x="-4.5" y="-3" width="5" height="8" fill="#d9c04a"/><rect x="-1.5" y="-4.5" width="6" height="9" fill="#ead75e"/><rect x="-0.5" y="-5.2" width="3" height="1.5" fill="#f5ecb0"/></g>
<g transform="translate(194.6,11.0) scale(1)"><path d="M-3.5,-1.5 L0.5,-1.5 A3.2,3.2 0 1 1 -1,4.5" fill="none" stroke="#d5e9f8" stroke-width="1.5" stroke-linejoin="round" stroke-linecap="round"/><polygon points="-5.5,-1.5 -2.3,-4.8 -2.3,1.8" fill="#d5e9f8"/></g>
<polygon points="203.8,10.0 208.2,10.0 206.0,12.9" fill="#d8ecf6"/>
<g transform="translate(218.0,11.0) scale(1)"><path d="M3.5,-1.5 L-0.5,-1.5 A3.2,3.2 0 1 0 1,4.5" fill="none" stroke="#d5e9f8" stroke-width="1.5" stroke-linejoin="round" stroke-linecap="round"/><polygon points="5.5,-1.5 2.3,-4.8 2.3,1.8" fill="#d5e9f8"/></g>
<polygon points="228.4,10.0 232.8,10.0 230.6,12.9" fill="#d8ecf6"/>
<g transform="translate(243.0,11.0) scale(1)"><path d="M-2,-2.5 L4,-2.5 M-4,2.5 L2,2.5" fill="none" stroke="#b9d3e6" stroke-width="1.6" stroke-linejoin="round" stroke-linecap="round"/><polygon points="-5.5,-2.5 -2,-5.5 -2,0.5" fill="#b9d3e6"/><polygon points="5.5,2.5 2,-0.5 2,5.5" fill="#b9d3e6"/></g>
<g transform="translate(255.0,10.0) scale(1)"><rect x="-3" y="-3.2" width="6" height="1" fill="#d8ecf6"/><polygon points="-3,-1 3,-1 0,2.6" fill="#d8ecf6"/></g>
<line x1="1135" y1="16" x2="1143" y2="16" stroke="#e8f2f7" stroke-width="1.6"/>
<g transform="translate(1163.0,12.5) scale(1)"><rect x="-3.5" y="-1.5" width="5.5" height="5.5" fill="none" stroke="#e8f2f7" stroke-width="1.1"/><path d="M-1.5,-1.5 L-1.5,-3.5 L4,-3.5 L4,2 L2,2" fill="none" stroke="#e8f2f7" stroke-width="1.1" stroke-linejoin="round" stroke-linecap="round"/></g>
<g transform="translate(1188.0,12.5) scale(1)"><path d="M-4,-4 L4,4 M4,-4 L-4,4" fill="none" stroke="#ffffff" stroke-width="1.6" stroke-linejoin="round" stroke-linecap="round"/></g>
<g transform="translate(1076.0,33.5) scale(1)"><circle cx="1" cy="-1" r="2.6" fill="none" stroke="#444" stroke-width="1"/><line x1="-1" y1="1" x2="-3.5" y2="3.8" stroke="#444" stroke-width="1.3"/></g>
<g transform="translate(1123.0,35.0) scale(1)"><circle cx="0" cy="0" r="4.6" fill="#f2d34a" stroke="#b89a20" stroke-width="0.5"/><circle cx="-1.6" cy="-1" r="0.6" fill="#6b5a10"/><circle cx="1.6" cy="-1" r="0.6" fill="#6b5a10"/><path d="M-2,1.2 Q0,3.2 2,1.2" fill="none" stroke="#6b5a10" stroke-width="0.7" stroke-linejoin="round" stroke-linecap="round"/></g>
<g transform="translate(1138.5,35.0) scale(1)"><circle cx="0" cy="0" r="4.6" fill="#e07a3a" stroke="#9c4a1a" stroke-width="0.5"/><circle cx="-1.6" cy="-1" r="0.6" fill="#5a2508"/><circle cx="1.6" cy="-1" r="0.6" fill="#5a2508"/><path d="M-2,2.6 Q0,0.8 2,2.6" fill="none" stroke="#5a2508" stroke-width="0.7" stroke-linejoin="round" stroke-linecap="round"/></g>
<text x="1153" y="38.5" font-family="Liberation Sans,sans-serif" font-size="9" font-weight="bold" fill="#dceaf2" text-anchor="middle">?</text>
<line x1="1163" y1="37.5" x2="1168" y2="37.5" stroke="#dceaf2" stroke-width="1.3"/>
<g transform="translate(1179.0,35.0) scale(1)"><rect x="-3" y="-1" width="4.5" height="4" fill="none" stroke="#dceaf2" stroke-width="0.9"/><path d="M-1.2,-1 L-1.2,-2.6 L3.3,-2.6 L3.3,1.4 L1.5,1.4" fill="none" stroke="#dceaf2" stroke-width="0.9" stroke-linejoin="round" stroke-linecap="round"/></g>
<g transform="translate(1193.0,35.0) scale(1)"><path d="M-2.6,-2.6 L2.6,2.6 M2.6,-2.6 L-2.6,2.6" fill="none" stroke="#f2f8fb" stroke-width="1.2" stroke-linejoin="round" stroke-linecap="round"/></g>
<g transform="translate(22.5,59.5) scale(1)"><rect x="-9" y="-7" width="13" height="16" fill="#cfcac4" stroke="#a9a39b" stroke-width="0.8" rx="1"/><rect x="-7" y="-5" width="9" height="12" fill="#e9e6e2"/><polygon points="-6,-7.5 -2.5,-10.5 1,-7.5" fill="#dca848"/><rect x="-6.5" y="-8.3" width="8" height="2.2" fill="#e2b04e" stroke="#b98828" stroke-width="0.5"/><polygon points="1,-1 7,-1 10.5,2.5 10.5,9 1,9" fill="#fdfdfd" stroke="#9a9a9a" stroke-width="0.8" stroke-linejoin="round"/><path d="M7,-1 L7,2.5 L10.5,2.5" fill="none" stroke="#9a9a9a" stroke-width="0.7" stroke-linejoin="round" stroke-linecap="round"/></g>
<g transform="translate(47.5,55.0) scale(0.86)"><circle cx="-2.5" cy="2.5" r="1.6" fill="none" stroke="#b9b9b9" stroke-width="0.9"/><circle cx="-2.5" cy="-1" r="1.6" fill="none" stroke="#b9b9b9" stroke-width="0.9"/><line x1="-1" y1="2" x2="5" y2="-3" stroke="#b9b9b9" stroke-width="1"/><line x1="-1" y1="-0.5" x2="5" y2="3.5" stroke="#c9c9c9" stroke-width="1"/></g>
<g transform="translate(47.5,70.6) scale(0.86)"><path d="M-4.5,-5 L0.5,-5 L0.5,2 L-4.5,2 Z" fill="#fafafa" stroke="#666" stroke-width="0.9" stroke-linejoin="round" stroke-linecap="round"/><path d="M-1.5,-2 L2.5,-2 L4.5,0 L4.5,5.5 L-1.5,5.5 Z" fill="#fdfdfd" stroke="#555" stroke-width="0.9" stroke-linejoin="round" stroke-linecap="round"/></g>
<g transform="translate(47.5,85.5) scale(0.86)"><rect x="-5" y="-5" width="8" height="9" fill="#c98a5a" stroke="#8a4a22" stroke-width="0.7"/><rect x="-3" y="-3.4" width="4" height="2.4" fill="#f4e4d0"/><rect x="-0.5" y="-0.5" width="5.5" height="5.5" fill="#f6f0ea" stroke="#8a4a22" stroke-width="0.7"/><polygon points="1,4 1,8 4,7" fill="#555"/></g>
<polygon points="57.2,84.5 61.8,84.5 59.5,87.4" fill="#333"/>
<g transform="translate(89.0,58.5) scale(1)"><path d="M-3.5,-7 L-3.5,5 L-0.8,2.5 L1.5,7.2 L3.3,6.4 L1.1,1.8 L5,1.8 Z" fill="#fbfdfe" stroke="#4d5a63" stroke-width="1.1" stroke-linejoin="round" stroke-linecap="round"/></g>
<polygon points="86.7,91.0 91.3,91.0 89.0,93.9" fill="#333"/>
<g transform="translate(114.0,55.0) scale(0.86)"><path d="M-4.5,-4.5 L4.5,-4.5 L4.5,-1.5 L1.2,2.2 L1.2,5.5 L-1.2,5.5 L-1.2,2.2 L-4.5,-1.5 Z" fill="#fbe3c4" stroke="#6b4a2a" stroke-width="0.9" stroke-linejoin="round" stroke-linecap="round"/><rect x="-4" y="-4.2" width="8" height="2.6" fill="#f39221"/><rect x="-0.8" y="-5.8" width="1.6" height="3" fill="#6b4a2a"/></g>
<g transform="translate(129.6,55.0) scale(0.86)"><rect x="-4" y="-1.5" width="8" height="7" fill="#f39221" stroke="#7a4a1a" stroke-width="0.8"/><rect x="-2.2" y="-5.8" width="4.4" height="4.6" fill="#f7c888" stroke="#7a4a1a" stroke-width="0.8"/><rect x="-0.6" y="0.2" width="1.2" height="3" fill="#7a4a1a"/></g>
<g transform="translate(154.4,55.0) scale(0.86)"><circle cx="-1.5" cy="-1" r="4" fill="#f39221" stroke="#8a4a22" stroke-width="0.6"/><circle cx="2.5" cy="1.5" r="3.2" fill="#c9c9c9" stroke="#777" stroke-width="0.6"/><rect x="-1" y="0" width="6" height="2.2" fill="#8a5a3a"/></g>
<g transform="translate(114.0,70.0) scale(0.86)"><rect x="-5.5" y="-4" width="11" height="8" fill="#f39221" stroke="#8a4a22" stroke-width="0.7" rx="1"/><rect x="-4" y="-1.6" width="3.4" height="3" fill="#fdf6ec"/><rect x="0.6" y="-1.6" width="3.4" height="3" fill="#fdf6ec"/></g>
<g transform="translate(129.6,70.0) scale(0.86)"><line x1="-5" y1="-4.5" x2="-1" y2="-4.5" stroke="#999" stroke-width="1"/><line x1="-3" y1="-4.5" x2="-3" y2="0" stroke="#999" stroke-width="1"/><line x1="-5" y1="-1" x2="-1" y2="-1" stroke="#aaa" stroke-width="0.8"/><rect x="-1" y="0.5" width="3" height="3" fill="#ddd" stroke="#aaa" stroke-width="0.6"/><rect x="3" y="2.5" width="3" height="3" fill="#ddd" stroke="#aaa" stroke-width="0.6"/><line x1="0" y1="-4" x2="5" y2="-4" stroke="#bbb" stroke-width="0.8"/></g>
<polygon points="139.7,68.7 144.3,68.7 142.0,71.6" fill="#333"/>
<g transform="translate(114.0,85.5) scale(0.86)"><path d="M-5.5,-5.5 L-0.5,-5.5 L1.5,-3.5 L1.5,3.5 L-5.5,3.5 Z" fill="#fdfdfd" stroke="#555" stroke-width="0.9" stroke-linejoin="round" stroke-linecap="round"/><path d="M0,-1 L0,7 L1.8,5.4 L3,8 L4.4,7.3 L3.2,4.8 L5.5,4.8 Z" fill="#fbfbfb" stroke="#444" stroke-width="0.8" stroke-linejoin="round" stroke-linecap="round"/><rect x="-4" y="3.5" width="4" height="2.5" fill="#f39221"/></g>
<g transform="translate(129.6,85.5) scale(0.86)"><line x1="-6" y1="-5" x2="-6" y2="5" stroke="#555" stroke-width="1.1"/><line x1="-6" y1="0" x2="-2" y2="0" stroke="#555" stroke-width="1"/><rect x="-2" y="-3.8" width="8" height="7.6" fill="#f39221" stroke="#b26a1a" stroke-width="0.6"/><rect x="0" y="-2" width="3.4" height="3.4" fill="#fbd9a4"/></g>
<polygon points="139.7,84.5 144.3,84.5 142.0,87.4" fill="#333"/>
<g transform="translate(187.7,58.3) scale(1)"><path d="M-9,8 Q-10,-6 3,-9" fill="none" stroke="#7ec6c3" stroke-width="1.1" stroke-linejoin="round" stroke-linecap="round"/><path d="M-7,-4 A6,6 0 1 1 -3,6" fill="none" stroke="#8fcfcb" stroke-width="1" stroke-linejoin="round" stroke-linecap="round"/><line x1="-9.5" y1="-6" x2="-4" y2="-6" stroke="#8fcfcb" stroke-width="0.9"/><polygon points="-5.5,8.5 -3.8,3.2 6,-4.8 9,-1.3 -0.8,6.8" fill="#efc53a" stroke="#3b3b3b" stroke-width="1" stroke-linejoin="round"/><polygon points="6,-4.8 7.6,-6.2 10.4,-2.6 9,-1.3" fill="#3b3b3b"/><polygon points="-5.5,8.5 -4.6,5.6 -2.6,7.6" fill="#3b3b3b"/></g>
<g transform="translate(222.0,57.8) scale(1)"><polygon points="-9,4.5 2,-3 8.5,5" fill="none" stroke="#d9924a" stroke-width="1" stroke-linejoin="round"/><rect x="-10.2" y="3.4" width="2.4" height="2.4" fill="#e8a040"/><rect x="7.3" y="3.8" width="2.4" height="2.4" fill="#e8a040"/><ellipse cx="0" cy="7.5" rx="9" ry="1.4" fill="#d4d4d4"/><polygon points="-2.5,1.5 -1.2,-2.6 6,-8.8 8.6,-6 1.4,0.4" fill="#efc53a" stroke="#3b3b3b" stroke-width="0.9" stroke-linejoin="round"/><polygon points="6,-8.8 7.3,-9.9 9.9,-7.1 8.6,-6" fill="#c0392b" stroke="#3b3b3b" stroke-width="0.6" stroke-linejoin="round"/><polygon points="-2.5,1.5 -1.9,-0.6 -0.4,0.9" fill="#3b3b3b"/></g>
<g transform="translate(246.4,55.2) scale(0.86)"><polygon points="-4.5,-1.5 -1,-4 4.5,-4 4.5,2 1,4.5 -4.5,4.5" fill="#f4f4f4" stroke="#a8a8a8" stroke-width="0.9" stroke-linejoin="round"/><path d="M-4.5,-1.5 L1,-1.5 L1,4.5 M1,-1.5 L4.5,-4" fill="none" stroke="#a8a8a8" stroke-width="0.8" stroke-linejoin="round" stroke-linecap="round"/></g>
<g transform="translate(246.4,70.0) scale(0.86)"><path d="M-5.5,-3 L-2,-5.5 L3,-5.5 L3,-3" fill="none" stroke="#555" stroke-width="0.9" stroke-linejoin="round" stroke-linecap="round"/><rect x="-5.5" y="-3" width="6" height="6" fill="#fafafa" stroke="#555" stroke-width="0.9"/><polygon points="-1.5,0 3.5,-2.5 5.5,1 5.5,5.5 -1.5,5.5" fill="#f2f2f2" stroke="#666" stroke-width="0.9" stroke-linejoin="round"/></g>
<g transform="translate(246.4,85.5) scale(0.86)"><polygon points="-5,-1 0,-5.5 5.5,-2.5 5.5,2.5 0.5,6 -5,3" fill="#8a5a2a"/><polygon points="-5,-1 0,-5.5 5.5,-2.5 0.5,1" fill="#f0a040"/><polygon points="-3,0 0.5,1 0.5,6 -3,4" fill="#d98a2a"/></g>
<g transform="translate(289.6,59.0) scale(1)"><polygon points="-10,-5.5 -3.5,-10 4,-6.5 4,6 -3,10 -10,6.5" fill="#e7852a"/><polygon points="-10,-5.5 -3.5,-10 4,-6.5 -3,-2.3" fill="#fbb868"/><polygon points="-3,-2.3 4,-6.5 4,6 -3,10" fill="#c4c4c4"/><polygon points="-10,-5.5 -3,-2.3 -3,3 -10,0" fill="#f39221"/><polygon points="-10,0 -3,3 -3,10 -10,6.5" fill="#8f8f8f"/><rect x="-0.5" y="-1" width="11" height="10.5" fill="#fdfdfd" stroke="#555" stroke-width="0.9"/><path d="M2,2.2 L8.5,2.2 M6.5,0.5 L8.5,2.2 L6.5,4 M8.5,6.2 L2,6.2 M4,4.5 L2,6.2 L4,8" fill="none" stroke="#444" stroke-width="0.9" stroke-linejoin="round" stroke-linecap="round"/></g>
<g transform="translate(340.0,59.5) scale(1)"><rect x="-9.6" y="-9.5" width="16" height="15" fill="#f2f2f2" stroke="#8e8e8e" stroke-width="1.1"/><polygon points="-6.5,-3.5 -1.5,-7 3.5,-5 3.5,1.5 -1.5,4 -6.5,2" fill="#9aa79a" stroke="#6a6a6a" stroke-width="0.6" stroke-linejoin="round"/><polygon points="-6.5,-3.5 -1.5,-7 3.5,-5 -1.5,-1.5" fill="#b7d08c"/><polygon points="-1.5,-1.5 3.5,-5 3.5,1.5 -1.5,4" fill="#7d9a6a"/><circle cx="4.5" cy="4.5" r="5" fill="#fdfdfd" stroke="#555" stroke-width="1"/><line x1="1.8" y1="4.5" x2="7.2" y2="4.5" stroke="#555" stroke-width="1"/><line x1="4.5" y1="1.8" x2="4.5" y2="7.2" stroke="#555" stroke-width="1"/></g>
<polygon points="309.5,88.0 313.9,88.0 311.7,90.9" fill="#333"/>
<polygon points="351.1,88.0 355.5,88.0 353.3,90.9" fill="#333"/>
<g transform="translate(390.0,58.8) scale(1)"><polygon points="-7,-5 0,-9 7.5,-5.5 7.5,1 1,4.5 1,9 -7,5" fill="#aebfc2" stroke="#5d6b6f" stroke-width="0.8" stroke-linejoin="round"/><polygon points="-7,-5 0,-9 7.5,-5.5 0.5,-1.5" fill="#d7e2e4" stroke="#5d6b6f" stroke-width="0.6" stroke-linejoin="round"/><path d="M0.5,-1.5 L0.5,4.5 M-7,0 L0.5,3.5 M-3.2,-7 L4,-3.5" fill="none" stroke="#5d6b6f" stroke-width="0.7" stroke-linejoin="round" stroke-linecap="round"/></g>
<g transform="translate(422.8,54.9) scale(0.86)"><rect x="0.5" y="-5" width="4" height="10" fill="#f39221"/><path d="M-5,-4 A2,2 0 1 1 -3,-1 L-5,3" fill="none" stroke="#4a4a4a" stroke-width="1" stroke-linejoin="round" stroke-linecap="round"/><line x1="-1" y1="-5" x2="-1" y2="5" stroke="#4a4a4a" stroke-width="0.9"/></g>
<g transform="translate(422.8,70.5) scale(0.86)"><polygon points="-6,-4.5 -1,0 -6,4.5" fill="#f39221"/><polygon points="6,-4.5 1,0 6,4.5" fill="#f39221"/><line x1="0" y1="-5.5" x2="0" y2="5.5" stroke="#4a4a4a" stroke-width="0.9"/></g>
<g transform="translate(422.8,85.9) scale(0.86)"><line x1="-3" y1="-5.5" x2="-3" y2="5.5" stroke="#4a4a4a" stroke-width="1"/><line x1="3" y1="-5.5" x2="3" y2="5.5" stroke="#4a4a4a" stroke-width="1"/><rect x="-1.5" y="-2.5" width="3" height="5" fill="none" stroke="#8c8c8c" stroke-width="0.8"/><line x1="-6" y1="0" x2="-3" y2="0" stroke="#4a4a4a" stroke-width="0.8"/><line x1="3" y1="0" x2="6" y2="0" stroke="#4a4a4a" stroke-width="0.8"/></g>
<g transform="translate(438.2,54.9) scale(0.86)"><line x1="-3" y1="-5.5" x2="-3" y2="5.5" stroke="#4a4a4a" stroke-width="1"/><circle cx="2" cy="0" r="3.2" fill="#d8d8d8" stroke="#4a4a4a" stroke-width="0.8"/><line x1="-0.5" y1="-5" x2="-0.5" y2="-3" stroke="#4a4a4a" stroke-width="0.8"/><line x1="-0.5" y1="3" x2="-0.5" y2="5" stroke="#4a4a4a" stroke-width="0.8"/></g>
<g transform="translate(438.2,70.5) scale(0.86)"><ellipse cx="-0.5" cy="4" rx="5" ry="1.8" fill="#f4f4f4" stroke="#4a4a4a" stroke-width="0.8"/><line x1="-0.5" y1="-5.5" x2="-0.5" y2="4" stroke="#4a4a4a" stroke-width="1"/><polygon points="-0.5,-5 4.5,-3 -0.5,-1" fill="#999"/></g>
<g transform="translate(438.2,85.9) scale(0.86)"><rect x="-5.5" y="0" width="5.5" height="5.5" fill="#f39221" stroke="#a85a12" stroke-width="0.5"/><rect x="0" y="-5.5" width="5.5" height="5.5" fill="#f39221" stroke="#a85a12" stroke-width="0.5"/><rect x="-1.5" y="-1.5" width="3" height="3" fill="#7a4a1a"/></g>
<g transform="translate(454.3,54.9) scale(0.86)"><line x1="-6" y1="5" x2="6" y2="5" stroke="#4a4a4a" stroke-width="1"/><path d="M-4,5 L1,-2 L4,5" fill="none" stroke="#4a4a4a" stroke-width="0.9" stroke-linejoin="round" stroke-linecap="round"/><path d="M-3,-3 L3,-5.5" fill="none" stroke="#f39221" stroke-width="1.4" stroke-linejoin="round" stroke-linecap="round"/><circle cx="0.5" cy="-3.2" r="1.4" fill="#f39221"/></g>
<g transform="translate(454.3,70.5) scale(0.86)"><circle cx="2.5" cy="2.5" r="3" fill="none" stroke="#4a4a4a" stroke-width="1"/><path d="M-5.5,-2.5 L3,-2.5" fill="none" stroke="#4a4a4a" stroke-width="1" stroke-linejoin="round" stroke-linecap="round"/><path d="M-5,-5 L0,0" fill="none" stroke="#f39221" stroke-width="1.6" stroke-linejoin="round" stroke-linecap="round"/></g>
<g transform="translate(454.3,85.9) scale(0.86)"><path d="M-5.5,5.5 Q-1,-1 5.5,-4.5" fill="none" stroke="#4a4a4a" stroke-width="0.9" stroke-linejoin="round" stroke-linecap="round"/><path d="M-5.5,-2 L1,0.5" fill="none" stroke="#f39221" stroke-width="1.5" stroke-linejoin="round" stroke-linecap="round"/><line x1="-1" y1="-5" x2="1.5" y2="3" stroke="#8c8c8c" stroke-width="0.8"/></g>
<polygon points="463.3,84.7 467.9,84.7 465.6,87.6" fill="#333"/>
<g transform="translate(478.4,54.9) scale(0.86)"><line x1="-4.5" y1="2.5" x2="4.5" y2="-3.5" stroke="#9a9a9a" stroke-width="1"/><line x1="-4.5" y1="5" x2="4.5" y2="-1" stroke="#c0c0c0" stroke-width="1"/></g>
<g transform="translate(478.4,70.5) scale(0.86)"><circle cx="-1.8" cy="-1.5" r="3.2" fill="#bdbdbd" stroke="#5a5a5a" stroke-width="0.9"/><circle cx="2.2" cy="2.2" r="3.2" fill="#d2d2d2" stroke="#5a5a5a" stroke-width="0.9"/><circle cx="-1.8" cy="-1.5" r="1" fill="#5a5a5a"/><circle cx="2.2" cy="2.2" r="1" fill="#5a5a5a"/></g>
<g transform="translate(478.4,85.9) scale(0.86)"><path d="M-5,-5 L-5,5.5 L5.5,5.5" fill="none" stroke="#4a4a4a" stroke-width="1" stroke-linejoin="round" stroke-linecap="round"/><path d="M-5,5.5 L4.5,-4.5" fill="none" stroke="#4a4a4a" stroke-width="0.9" stroke-linejoin="round" stroke-linecap="round"/><path d="M0,5.5 A5,5 0 0 0 -1.5,2" fill="none" stroke="#8c8c8c" stroke-width="0.8" stroke-linejoin="round" stroke-linecap="round"/><polygon points="2,-4.8 5.2,-5.2 4.8,-2" fill="#4a4a4a"/></g>
<g transform="translate(494.2,54.9) scale(0.86)"><line x1="-5.5" y1="-5.5" x2="-5.5" y2="5.5" stroke="#4a4a4a" stroke-width="1.1"/><line x1="5.5" y1="-5.5" x2="5.5" y2="5.5" stroke="#4a4a4a" stroke-width="1.1"/><polygon points="-4,0 -0.8,-3.5 -0.8,3.5" fill="#f39221"/><polygon points="4,0 0.8,-3.5 0.8,3.5" fill="#f39221"/><line x1="-4.5" y1="-5.5" x2="-6.5" y2="-5.5" stroke="#4a4a4a" stroke-width="0.8"/></g>
<g transform="translate(494.2,70.5) scale(0.86)"><rect x="-5.5" y="-5.5" width="11" height="11" fill="#fbe6c8" stroke="#c9822a" stroke-width="0.9"/><circle cx="0" cy="0" r="2.8" fill="#f39221" stroke="#a85a12" stroke-width="0.6"/><line x1="-5.5" y1="0" x2="-3" y2="0" stroke="#c9822a" stroke-width="0.8"/><line x1="3" y1="0" x2="5.5" y2="0" stroke="#c9822a" stroke-width="0.8"/></g>
<g transform="translate(494.2,85.9) scale(0.86)"><rect x="-5" y="-5.5" width="10" height="2" fill="#f39221"/><polygon points="-4.5,-2 4.5,-2 0,3" fill="#f39221"/><polygon points="-2.5,2.5 2.5,2.5 0,5.5" fill="#d9822a"/></g>
<g transform="translate(514.1,54.9) scale(0.86)"><rect x="-5.5" y="-5" width="11" height="10" fill="#f6f6f6" stroke="#4a4a4a" stroke-width="1"/><rect x="-3.5" y="-3" width="3" height="2.4" fill="none" stroke="#8c8c8c" stroke-width="0.8"/><rect x="0.8" y="-3" width="3" height="2.4" fill="none" stroke="#8c8c8c" stroke-width="0.8"/><rect x="-3.5" y="0.8" width="3" height="2.4" fill="none" stroke="#8c8c8c" stroke-width="0.8"/><rect x="0.8" y="0.8" width="3" height="2.4" fill="none" stroke="#8c8c8c" stroke-width="0.8"/></g>
<g transform="translate(514.1,70.5) scale(0.86)"><polygon points="-6,-4.5 -1.5,0 -6,4.5" fill="#f39221"/><line x1="0" y1="-5.5" x2="0" y2="5.5" stroke="#4a4a4a" stroke-width="1"/><path d="M2,-4 L5,-4 L5,-1 M2,4 L5,4 L5,1" fill="none" stroke="#4a4a4a" stroke-width="1" stroke-linejoin="round" stroke-linecap="round"/><rect x="2" y="-1.5" width="3" height="3" fill="#4a4a4a"/></g>
<g transform="translate(514.1,85.9) scale(0.86)"><rect x="-4.5" y="-4.5" width="9.5" height="9.5" fill="#f1f1f1" stroke="#aaaaaa" stroke-width="0.9" rx="1.5"/><path d="M-2,2 L2.5,2 L2.5,-1.5" fill="none" stroke="#aaaaaa" stroke-width="0.9" stroke-linejoin="round" stroke-linecap="round"/><rect x="-2.5" y="-2.5" width="3.5" height="3" fill="none" stroke="#bbbbbb" stroke-width="0.8"/></g>
<g transform="translate(547.0,60.5) scale(1)"><circle cx="0" cy="2.5" r="6" fill="#f4f7f9" stroke="#5a6570" stroke-width="1"/><circle cx="0" cy="2.5" r="2.6" fill="#f39221" stroke="#a85a12" stroke-width="0.6"/><line x1="0" y1="2.5" x2="0" y2="-9" stroke="#5a6570" stroke-width="1"/><polygon points="-2,-7 0,-10.5 2,-7" fill="#e9a6a0" stroke="#9a5a55" stroke-width="0.5" stroke-linejoin="round"/><line x1="0" y1="2.5" x2="9" y2="2.5" stroke="#5a6570" stroke-width="1"/><circle cx="8" cy="2.5" r="1.5" fill="#fdfdfd" stroke="#5a6570" stroke-width="0.7"/><circle cx="10.6" cy="2.5" r="1.3" fill="#fdfdfd" stroke="#5a6570" stroke-width="0.7"/></g>
<g transform="translate(595.0,58.0) scale(1)"><g transform="scale(1.25)"><polygon points="0,-7 6,-4 0,-1 -6,-4" fill="#f9b85a"/><polygon points="-6,-4 0,-1 0,7 -6,4" fill="#f39221"/><polygon points="0,-1 6,-4 6,4 0,7" fill="#c96a12"/></g></g>
<g transform="translate(595.0,58.0) scale(1)"><polygon points="-7,-3.5 -2.5,-1.2 -2.5,5 -7,2.8" fill="#d9d9d9"/><polygon points="-3.5,-0.5 1,-2.5 1,2 -3.5,4" fill="#fbd9a8"/></g>
<g transform="translate(595.0,67.3) scale(1)"><line x1="-7" y1="0" x2="6" y2="0" stroke="#1a1a1a" stroke-width="1.8"/><polygon points="4.5,-3 9,0 4.5,3" fill="#1a1a1a"/></g>
<g transform="translate(633.5,55.5) scale(0.86)"><g transform="scale(0.95)"><polygon points="0,-7 6,-4 0,-1 -6,-4" fill="#f1f3f4" stroke="#5a6268" stroke-width="0.6"/><polygon points="-6,-4 0,-1 0,7 -6,4" fill="#c6ccd0" stroke="#5a6268" stroke-width="0.6"/><polygon points="0,-1 6,-4 6,4 0,7" fill="#9aa2a8" stroke="#5a6268" stroke-width="0.6"/></g></g>
<g transform="translate(643.5,63.5) scale(1)"><g transform="scale(0.95)"><polygon points="0,-7 6,-4 0,-1 -6,-4" fill="#f9b85a"/><polygon points="-6,-4 0,-1 0,7 -6,4" fill="#f39221"/><polygon points="0,-1 6,-4 6,4 0,7" fill="#c96a12"/></g></g>
<g transform="translate(0.0,0.0) scale(1)"><path d="M630.5,62 Q631,67.5 637,66" fill="none" stroke="#f39221" stroke-width="1.6" stroke-linejoin="round" stroke-linecap="round"/><polygon points="636,63.3 639.6,66 636,68.6" fill="#f39221"/></g>
<polygon points="613.9,88.0 618.3,88.0 616.1,90.9" fill="#333"/>
<polygon points="643.5,88.0 647.9,88.0 645.7,90.9" fill="#333"/>
<g transform="translate(663.0,55.2) scale(0.86)"><ellipse cx="0" cy="-1.5" rx="4.5" ry="3" fill="#c9c9c9" stroke="#777" stroke-width="0.7"/><rect x="-5" y="1.2" width="10" height="2.2" fill="#2a2a2a"/><rect x="-4.5" y="-1.5" width="9" height="3" fill="#bdbdbd"/></g>
<g transform="translate(663.0,70.1) scale(0.86)"><rect x="-5.5" y="-5" width="5" height="4" fill="#d9d9d9" stroke="#999" stroke-width="0.7"/><rect x="1" y="1" width="5" height="4.5" fill="#e4e4e4" stroke="#999" stroke-width="0.7"/><path d="M-3,-1 L-3,3 L1,3" fill="none" stroke="#999" stroke-width="0.9" stroke-linejoin="round" stroke-linecap="round"/></g>
<g transform="translate(688.4,54.4) scale(0.86)"><rect x="-3.6" y="-4.5" width="7.2" height="9.5" fill="#9fc3c6" stroke="#4a6a6e" stroke-width="0.8" rx="1"/><ellipse cx="0" cy="-4.5" rx="3.6" ry="1.5" fill="#d4e6e8" stroke="#4a6a6e" stroke-width="0.7"/><line x1="-1.2" y1="-2" x2="-1.2" y2="4" stroke="#4a6a6e" stroke-width="0.6"/><line x1="1.2" y1="-2" x2="1.2" y2="4" stroke="#4a6a6e" stroke-width="0.6"/></g>
<g transform="translate(708.5,54.9) scale(0.86)"><polygon points="-4.5,3.5 -2,-2 0,-5 2.5,-2 4.5,3.5 0,5.5" fill="#e9e9e9" stroke="#bdbdbd" stroke-width="0.9" stroke-linejoin="round"/><circle cx="0" cy="0.5" r="1.8" fill="none" stroke="#c4c4c4" stroke-width="0.8"/></g>
<g transform="translate(688.4,70.1) scale(0.86)"><rect x="-3.6" y="-3" width="7.2" height="8.5" fill="#c4c4c4" stroke="#5a5a5a" stroke-width="0.8" rx="1"/><ellipse cx="0" cy="-3" rx="3.6" ry="1.5" fill="#e4e4e4" stroke="#5a5a5a" stroke-width="0.7"/><path d="M-2,-5.5 L2.5,-6.5" fill="none" stroke="#5a5a5a" stroke-width="0.8" stroke-linejoin="round" stroke-linecap="round"/><line x1="-1.2" y1="-0.5" x2="-1.2" y2="4.5" stroke="#5a5a5a" stroke-width="0.6"/><line x1="1.2" y1="-0.5" x2="1.2" y2="4.5" stroke="#5a5a5a" stroke-width="0.6"/></g>
<g transform="translate(687.5,85.9) scale(0.86)"><rect x="-5.5" y="-5" width="11" height="10" fill="#f4f4f4" stroke="#3a3a3a" stroke-width="1"/><rect x="-5.5" y="-5" width="11" height="2.6" fill="#3a3a3a"/><line x1="-2" y1="-2.4" x2="-2" y2="5" stroke="#3a3a3a" stroke-width="0.8"/><line x1="1.8" y1="-2.4" x2="1.8" y2="5" stroke="#3a3a3a" stroke-width="0.8"/><line x1="-5.5" y1="1.4" x2="5.5" y2="1.4" stroke="#3a3a3a" stroke-width="0.8"/></g>
<g transform="translate(733.9,54.9) scale(0.86)"><rect x="-5" y="-5" width="10" height="10" fill="#f1f1f1" stroke="#8e8e8e" stroke-width="1"/><rect x="-2.6" y="-2.6" width="5.2" height="5.2" fill="#f39221"/></g>
<g transform="translate(749.6,54.9) scale(0.86)"><circle cx="0" cy="0" r="5.2" fill="#fbe0b8" stroke="#8a5a2a" stroke-width="1"/><circle cx="0" cy="0" r="2.4" fill="#f39221" stroke="#a85a12" stroke-width="0.5"/></g>
<g transform="translate(764.5,54.9) scale(0.86)"><path d="M-5,-3 A2,2 0 1 1 -3,0 L-5,4" fill="none" stroke="#4a4a4a" stroke-width="1" stroke-linejoin="round" stroke-linecap="round"/><line x1="0" y1="-5.5" x2="0" y2="5.5" stroke="#4a4a4a" stroke-width="1"/><rect x="1.5" y="-5" width="3.5" height="10" fill="#f39221"/><line x1="5.8" y1="-5.5" x2="5.8" y2="5.5" stroke="#4a4a4a" stroke-width="0.8"/></g>
<g transform="translate(733.9,70.1) scale(0.86)"><line x1="-5" y1="2.5" x2="4.5" y2="-3.5" stroke="#8e8e8e" stroke-width="1"/><line x1="-5" y1="5" x2="4.5" y2="-1" stroke="#b4b4b4" stroke-width="1"/></g>
<g transform="translate(749.6,70.1) scale(0.86)"><rect x="-5" y="-5" width="10" height="10" fill="#e9e9e9" stroke="#7a7a7a" stroke-width="1.1"/><path d="M-2.5,2.5 L-2.5,-2.5 L2.5,-2.5" fill="none" stroke="#9a9a9a" stroke-width="0.9" stroke-linejoin="round" stroke-linecap="round"/><line x1="-2.5" y1="2.5" x2="2.5" y2="-2.5" stroke="#9a9a9a" stroke-width="0.8"/></g>
<g transform="translate(764.5,70.1) scale(0.86)"><circle cx="-3" cy="-3" r="2" fill="none" stroke="#7a5a2a" stroke-width="1"/><circle cx="1" cy="-1" r="1.5" fill="#8a6a2a"/><rect x="0" y="1.5" width="5" height="4" fill="#e7b84a" stroke="#8a6a2a" stroke-width="0.7"/><circle cx="2.5" cy="3.5" r="0.9" fill="#5a4a1a"/></g>
<g transform="translate(733.9,85.9) scale(0.86)"><path d="M-4.5,-5.5 L-4.5,4.5 L5.5,4.5" fill="none" stroke="#6a6a6a" stroke-width="1" stroke-linejoin="round" stroke-linecap="round"/><path d="M-4.5,0 L0,0 L0,4.5" fill="none" stroke="#9a9a9a" stroke-width="0.8" stroke-linejoin="round" stroke-linecap="round"/></g>
<g transform="translate(749.6,85.9) scale(0.86)"><circle cx="2" cy="1.5" r="3" fill="none" stroke="#4a4a4a" stroke-width="1.1"/><line x1="-6" y1="-1.5" x2="4" y2="-1.5" stroke="#4a4a4a" stroke-width="1"/><line x1="-6" y1="-1.5" x2="-3.5" y2="1" stroke="#8a8a8a" stroke-width="0.8"/></g>
<g transform="translate(764.5,85.9) scale(0.86)"><path d="M-5.5,3.5 L-5.5,-3.5 Q-2.5,-5.5 -2.5,-1 Q-2.5,3 -5.5,1.5" fill="none" stroke="#f39221" stroke-width="1.2" stroke-linejoin="round" stroke-linecap="round"/><path d="M0,0.5 Q3,-3 4,1 L4,5" fill="none" stroke="#f39221" stroke-width="1.2" stroke-linejoin="round" stroke-linecap="round"/><path d="M3,5.5 L6,3" fill="none" stroke="#7a4a1a" stroke-width="1" stroke-linejoin="round" stroke-linecap="round"/></g>
<g transform="translate(789.6,54.9) scale(0.86)"><rect x="-5" y="-4.5" width="3" height="3" fill="#7a6a5a"/><rect x="2" y="-4.5" width="3" height="3" fill="#7a6a5a"/><rect x="-5" y="1.5" width="3" height="3" fill="#7a6a5a"/><rect x="2" y="1.5" width="3" height="3" fill="#7a6a5a"/><path d="M-2,-3 L2,-3 M-2,3 L2,3 M-3.5,-1.5 L-3.5,1.5 M3.5,-1.5 L3.5,1.5" fill="none" stroke="#555" stroke-width="0.8" stroke-linejoin="round" stroke-linecap="round"/></g>
<g transform="translate(805.0,55.2) scale(0.86)"><path d="M-3,-5 A6,6 0 0 0 -3,5" fill="none" stroke="#5a5a5a" stroke-width="1" stroke-linejoin="round" stroke-linecap="round"/><circle cx="-2.5" cy="-4.5" r="1.6" fill="#7a6a5a"/><circle cx="-4.5" cy="0" r="1.6" fill="#7a6a5a"/><circle cx="-1.5" cy="4.5" r="1.6" fill="#7a6a5a"/><circle cx="4" cy="3" r="1.8" fill="#8a6a3a"/><circle cx="3.5" cy="-2" r="1.4" fill="#8a6a3a"/></g>
<g transform="translate(789.3,70.1) scale(0.86)"><circle cx="-1.5" cy="-1.5" r="4" fill="#d7b06a" stroke="#6a4a2a" stroke-width="0.7"/><circle cx="-1.5" cy="-1.5" r="1.5" fill="#8a5a2a"/><polygon points="0.5,1 5.5,6 0.5,6" fill="#3a3a3a"/><path d="M-5.5,3 L-2.5,6" fill="none" stroke="#3a3a3a" stroke-width="1" stroke-linejoin="round" stroke-linecap="round"/></g>
<g transform="translate(805.0,70.1) scale(0.86)"><circle cx="-2" cy="-2" r="3.2" fill="#d7b06a" stroke="#6a4a2a" stroke-width="0.7"/><circle cx="3" cy="-0.5" r="2.6" fill="#e0bd7a" stroke="#6a4a2a" stroke-width="0.6"/><rect x="-4" y="2" width="6" height="2.4" fill="#5a4a3a"/><rect x="1.5" y="3.8" width="4" height="1.8" fill="#3a3a3a"/></g>
<g transform="translate(789.6,85.9) scale(0.86)"><circle cx="-2.5" cy="-2.5" r="2.8" fill="#c98a6a" stroke="#6a4a3a" stroke-width="0.7"/><circle cx="2" cy="1.5" r="3.4" fill="#e4e4e4" stroke="#5a5a5a" stroke-width="0.9"/><circle cx="2" cy="1.5" r="1.2" fill="#5a5a5a"/><circle cx="-3.5" cy="3" r="1.6" fill="#b07a5a"/></g>
<polygon points="915.8,59.0 921.8,59.0 918.8,61.9" fill="#777"/>
<g transform="translate(932.8,61.4) scale(0.86)"><rect x="-1" y="-2" width="6" height="5.5" fill="#f2f2f2" stroke="#4a4a4a" stroke-width="1"/><path d="M-5.5,-3.5 L-2,-3.5" fill="none" stroke="#4a4a4a" stroke-width="0.9" stroke-linejoin="round" stroke-linecap="round"/><rect x="0.5" y="-3.2" width="3" height="1.6" fill="#4a4a4a"/></g>
<g transform="translate(830.4,81.5) scale(0.86)"><rect x="-5" y="-2" width="8.5" height="7" fill="#e9e3d4" stroke="#6a5a3a" stroke-width="0.8"/><path d="M-3,1 L-0.5,3.5 L5.5,-5" fill="none" stroke="#d9a02a" stroke-width="1.5" stroke-linejoin="round" stroke-linecap="round"/><polygon points="3.5,-5.5 6,-5.5 6,-3" fill="#6a5a3a"/></g>
<g transform="translate(845.6,81.5) scale(0.86)"><rect x="-5" y="-5" width="10" height="10" fill="#f7f7f7" stroke="#3e3e3e" stroke-width="1"/><line x1="-5" y1="-2" x2="5" y2="-2" stroke="#3e3e3e" stroke-width="0.8"/><path d="M-2,3 L3,-2 L5,0 L0,5 Z" fill="#5a5a5a"/></g>
<g transform="translate(861.4,81.5) scale(0.86)"><rect x="-5" y="-5" width="10" height="10" fill="#f7f7f7" stroke="#3e3e3e" stroke-width="1"/><rect x="-2.5" y="-2.5" width="5" height="6" fill="none" stroke="#5a5a5a" stroke-width="0.8"/><path d="M-1,2.5 L3.5,-4" fill="none" stroke="#3e3e3e" stroke-width="1.2" stroke-linejoin="round" stroke-linecap="round"/></g>
<g transform="translate(876.8,81.5) scale(0.86)"><rect x="-5" y="-5" width="10" height="10" fill="#fafafa" stroke="#9a9a9a" stroke-width="0.9"/><line x1="-3" y1="-2" x2="1" y2="-2" stroke="#9a9a9a" stroke-width="0.8"/><rect x="-0.5" y="0" width="4.5" height="3.5" fill="none" stroke="#8a8a8a" stroke-width="0.8"/><line x1="-3" y1="1" x2="-1.5" y2="1" stroke="#9a9a9a" stroke-width="0.8"/></g>
<g transform="translate(892.5,81.5) scale(0.86)"><rect x="-5" y="-5" width="10" height="10" fill="#f7f7f7" stroke="#2e2e2e" stroke-width="1.1"/><rect x="-5" y="-5" width="4" height="10" fill="#2e2e2e"/><rect x="0.5" y="-2.5" width="3" height="2.2" fill="#c0392b"/><line x1="0" y1="2" x2="4" y2="2" stroke="#2e2e2e" stroke-width="1"/></g>
<g transform="translate(908.3,81.5) scale(0.86)"><rect x="-5.5" y="-5.5" width="7" height="7" fill="#2e2e2e"/><rect x="-1" y="-1" width="6.5" height="6.5" fill="#f7f7f7" stroke="#2e2e2e" stroke-width="1"/><rect x="-4" y="-4" width="2.4" height="2.4" fill="#7aa0d0"/></g>
<g transform="translate(924.0,81.5) scale(0.86)"><rect x="-5" y="-5" width="10" height="10" fill="#d9d9d9" stroke="#c4c4c4" stroke-width="0.8"/><line x1="-3" y1="-1.5" x2="3" y2="-1.5" stroke="#bdbdbd" stroke-width="1"/><line x1="-3" y1="1.5" x2="3" y2="1.5" stroke="#bdbdbd" stroke-width="1"/></g>
<g transform="translate(956.4,54.9) scale(0.86)"><rect x="-5.5" y="-5.5" width="11" height="11" fill="#f39221"/><path d="M-5.5,-1.8 L5.5,-1.8 M-5.5,1.8 L5.5,1.8 M-1.8,-5.5 L-1.8,5.5 M1.8,-5.5 L1.8,5.5" fill="none" stroke="#fbd9a8" stroke-width="0.8" stroke-linejoin="round" stroke-linecap="round"/></g>
<g transform="translate(956.4,70.1) scale(0.86)"><circle cx="-1.5" cy="-0.5" r="4.2" fill="#f4f4f4" stroke="#7a7a7a" stroke-width="0.9"/><circle cx="2.5" cy="2" r="3.4" fill="#ececec" stroke="#7a7a7a" stroke-width="0.9"/><circle cx="-1.5" cy="-0.5" r="1.2" fill="none" stroke="#7a7a7a" stroke-width="0.7"/><path d="M2,0.5 L4.5,3.5" fill="none" stroke="#7a7a7a" stroke-width="0.8" stroke-linejoin="round" stroke-linecap="round"/></g>
<g transform="translate(956.4,85.9) scale(0.86)"><circle cx="-1.5" cy="-0.5" r="4.2" fill="#f4f4f4" stroke="#7a7a7a" stroke-width="0.9"/><rect x="0" y="0.5" width="5.5" height="5" fill="#ececec" stroke="#7a7a7a" stroke-width="0.9"/><circle cx="-1.5" cy="-0.5" r="1.2" fill="none" stroke="#7a7a7a" stroke-width="0.7"/></g>
<g transform="translate(990.5,59.0) scale(1)"><rect x="-9.5" y="-9.5" width="19" height="19" fill="#f7f7f7" stroke="#8e8e8e" stroke-width="1.1"/><line x1="-9.5" y1="-6.3" x2="9.5" y2="-6.3" stroke="#8e8e8e" stroke-width="0.9"/><circle cx="3" cy="0.5" r="4.6" fill="#fdfdfd" stroke="#5a5a5a" stroke-width="1"/><line x1="-0.5" y1="4" x2="-4.5" y2="8" stroke="#5a5a5a" stroke-width="1.8"/><line x1="-7" y1="-1" x2="-7" y2="6" stroke="#b4b4b4" stroke-width="0.8"/></g>
<g transform="translate(1023.5,59.0) scale(1)"><rect x="-9.3" y="-9.8" width="18.6" height="19.6" fill="#f7f7f7" stroke="#8e8e8e" stroke-width="1.1"/><path d="M-2,-2 L-6.5,-6.5 M2,-2 L6.5,-6.5 M-2,2 L-6.5,6.5 M2,2 L6.5,6.5" fill="none" stroke="#5a5a5a" stroke-width="1" stroke-linejoin="round" stroke-linecap="round"/><path d="M-6.5,-3.5 L-6.5,-6.5 L-3.5,-6.5 M6.5,-3.5 L6.5,-6.5 L3.5,-6.5 M-6.5,3.5 L-6.5,6.5 L-3.5,6.5 M6.5,3.5 L6.5,6.5 L3.5,6.5" fill="none" stroke="#5a5a5a" stroke-width="1" stroke-linejoin="round" stroke-linecap="round"/></g>
<g transform="translate(1048.2,55.1) scale(0.86)"><circle cx="1.5" cy="-1.5" r="3.8" fill="#fdfdfd" stroke="#4a4a4a" stroke-width="1"/><line x1="-1.2" y1="1.2" x2="-5" y2="5" stroke="#4a4a4a" stroke-width="1.7"/><line x1="0" y1="-1.5" x2="3" y2="-1.5" stroke="#8a8a8a" stroke-width="0.8"/></g>
<g transform="translate(1063.9,55.1) scale(0.86)"><circle cx="-1" cy="-1" r="4.2" fill="#f39221" stroke="#8a4a12" stroke-width="0.7"/><path d="M-3,-1.5 A2.5,2.5 0 0 1 1,-3" fill="none" stroke="#fde4c0" stroke-width="0.9" stroke-linejoin="round" stroke-linecap="round"/><line x1="2" y1="2" x2="5" y2="5" stroke="#3a3a3a" stroke-width="1.8"/><rect x="1" y="3.5" width="5" height="2" fill="#c0392b"/></g>
<g transform="translate(1079.6,55.1) scale(0.86)"><rect x="-5.5" y="-3" width="8" height="8" fill="#f1f1f1" stroke="#7a7a7a" stroke-width="0.9"/><rect x="-2.5" y="-5.5" width="8" height="8" fill="#f9f9f9" stroke="#7a7a7a" stroke-width="0.9"/><path d="M1.5,-3 L1.5,1 M0,-0.5 L1.5,1 L3,-0.5" fill="none" stroke="#4a4a4a" stroke-width="0.9" stroke-linejoin="round" stroke-linecap="round"/></g>
<g transform="translate(1048.2,70.4) scale(0.86)"><rect x="-5.5" y="-5" width="11" height="10" fill="#f7f7f7" stroke="#5a5a5a" stroke-width="1"/><line x1="-5.5" y1="-2.6" x2="5.5" y2="-2.6" stroke="#5a5a5a" stroke-width="0.8"/><path d="M-3.5,1.2 L3.5,1.2 M-2,-0.2 L-3.5,1.2 L-2,2.6 M2,-0.2 L3.5,1.2 L2,2.6" fill="none" stroke="#3a3a3a" stroke-width="0.9" stroke-linejoin="round" stroke-linecap="round"/></g>
<g transform="translate(1063.9,70.4) scale(0.86)"><path d="M-5,-3 L2,-3 Q5,-3 5,0 Q5,2.5 2,2.5 L-5,2.5" fill="none" stroke="#4a4a4a" stroke-width="1" stroke-linejoin="round" stroke-linecap="round"/><path d="M-2.5,-5 L-5,-3 L-2.5,-1" fill="none" stroke="#4a4a4a" stroke-width="1" stroke-linejoin="round" stroke-linecap="round"/><ellipse cx="-0.5" cy="3.5" rx="4.5" ry="1.8" fill="none" stroke="#6a6a6a" stroke-width="0.9"/></g>
<g transform="translate(1079.6,70.4) scale(0.86)"><polygon points="-5,0 0,-5 5,0 0,5" fill="#eeeeee" stroke="#6a6a6a" stroke-width="0.9" stroke-linejoin="round"/><path d="M-5,0 L5,0 M0,-5 L0,5" fill="none" stroke="#8a8a8a" stroke-width="0.7" stroke-linejoin="round" stroke-linecap="round"/><path d="M2.5,-5.5 L5.5,-5.5 L5.5,-2.5" fill="none" stroke="#6a6a6a" stroke-width="0.8" stroke-linejoin="round" stroke-linecap="round"/></g>
<g transform="translate(1048.2,86.1) scale(0.86)"><rect x="-5.5" y="-5.5" width="11" height="11" fill="#f4f4f4" stroke="#8a8a8a" stroke-width="1" rx="1.5"/><path d="M-2.8,-1 A3,3 0 1 0 0,-3" fill="none" stroke="#5a5a5a" stroke-width="1" stroke-linejoin="round" stroke-linecap="round"/><polygon points="-0.5,-5 2,-3 -0.5,-1.2" fill="#5a5a5a"/></g>
<g transform="translate(1063.9,86.1) scale(0.86)"><rect x="-5.5" y="-5.5" width="11" height="11" fill="#f4f4f4" stroke="#8a8a8a" stroke-width="1" rx="1.5"/><path d="M2.8,-1 A3,3 0 1 1 0,-3" fill="none" stroke="#5a5a5a" stroke-width="1" stroke-linejoin="round" stroke-linecap="round"/><polygon points="0.5,-5 -2,-3 0.5,-1.2" fill="#5a5a5a"/></g>
<g transform="translate(1080.6,86.1) scale(0.86)"><g transform="scale(0.8)"><polygon points="0,-7 6,-4 0,-1 -6,-4" fill="#f9b85a"/><polygon points="-6,-4 0,-1 0,7 -6,4" fill="#f39221"/><polygon points="0,-1 6,-4 6,4 0,7" fill="#c96a12"/></g><path d="M-7.5,-4 L-7.5,-1 M-7.5,1 L-7.5,4" fill="none" stroke="#5a5a5a" stroke-width="1.2" stroke-linejoin="round" stroke-linecap="round"/><rect x="-3" y="2" width="2" height="2" fill="#c0392b"/></g>
<g transform="translate(1109.5,57.7) scale(1)"><rect x="-5.5" y="-4" width="11" height="9" fill="#e6eaf0" stroke="#44526a" stroke-width="1.1"/><path d="M-3.5,2.5 L-1,-0.5 L1,1.5 L3.5,-1.5" fill="none" stroke="#44526a" stroke-width="1" stroke-linejoin="round" stroke-linecap="round"/><path d="M1.5,-3.5 L5.5,-7" fill="none" stroke="#2f66b0" stroke-width="1.6" stroke-linejoin="round" stroke-linecap="round"/><rect x="-3.5" y="-2.5" width="3" height="1.6" fill="#7a8aa6"/></g>
<polygon points="1106.1,89.3 1110.7,89.3 1108.4,92.2" fill="#333"/>
<g transform="translate(11.6,119.3) scale(1)"><rect x="-7.6" y="-3.6" width="15.2" height="7.2" fill="#8fb4e2" stroke="#1d2c5c" stroke-width="1.3" rx="0.8"/><rect x="-7.6" y="-3.9" width="15.2" height="1.6" fill="#1d2c5c"/><rect x="-5.5" y="-0.6" width="3" height="1.6" fill="#e8f0fa"/><rect x="-1.5" y="-0.6" width="3" height="1.6" fill="#e8f0fa"/><rect x="2.5" y="-0.6" width="3" height="1.6" fill="#e8f0fa"/></g>
<g transform="translate(17.0,141.3) scale(1)"><rect x="-4.2" y="-4" width="7" height="8" fill="#eaf3fb" stroke="#2d7cc4" stroke-width="1"/><rect x="-1.5" y="-1" width="5.5" height="5" fill="#4a9ad8" stroke="#1f5f9f" stroke-width="0.7"/><rect x="-2.8" y="-2.6" width="3" height="1.2" fill="#2d7cc4"/></g>
<path d="M94.1,138.4 L99.9,144.2 M99.9,138.4 L94.1,144.2" stroke="#1a1a1a" stroke-width="1.5" fill="none"/>
<g transform="translate(119.5,141.3) scale(1)"><rect x="-4.2" y="-4" width="7" height="8" fill="#eaf3fb" stroke="#2d7cc4" stroke-width="1"/><rect x="-1.5" y="-1" width="5.5" height="5" fill="#4a9ad8" stroke="#1f5f9f" stroke-width="0.7"/><rect x="-2.8" y="-2.6" width="3" height="1.2" fill="#2d7cc4"/></g>
<path d="M189.6,138.4 L195.4,144.2 M195.4,138.4 L189.6,144.2" stroke="#1a1a1a" stroke-width="1.5" fill="none"/>
<g transform="translate(215.5,141.3) scale(1)"><rect x="-4.2" y="-4" width="7" height="8" fill="#eaf3fb" stroke="#2d7cc4" stroke-width="1"/><rect x="-1.5" y="-1" width="5.5" height="5" fill="#4a9ad8" stroke="#1f5f9f" stroke-width="0.7"/><rect x="-2.8" y="-2.6" width="3" height="1.2" fill="#2d7cc4"/></g>
<path d="M296.1,138.4 L301.9,144.2 M301.9,138.4 L296.1,144.2" stroke="#1a1a1a" stroke-width="1.5" fill="none"/>
<g transform="translate(322.0,141.3) scale(1)"><rect x="-4.2" y="-4" width="7" height="8" fill="#eaf3fb" stroke="#2d7cc4" stroke-width="1"/><rect x="-1.5" y="-1" width="5.5" height="5" fill="#4a9ad8" stroke="#1f5f9f" stroke-width="0.7"/><rect x="-2.8" y="-2.6" width="3" height="1.2" fill="#2d7cc4"/></g>
<path d="M391.6,138.4 L397.4,144.2 M397.4,138.4 L391.6,144.2" stroke="#1a1a1a" stroke-width="1.5" fill="none"/>
<g transform="translate(416.0,141.3) scale(1)"><rect x="-4.2" y="-4" width="7" height="8" fill="#eaf3fb" stroke="#2d7cc4" stroke-width="1"/><rect x="-1.5" y="-1" width="5.5" height="5" fill="#4a9ad8" stroke="#1f5f9f" stroke-width="0.7"/><rect x="-2.8" y="-2.6" width="3" height="1.2" fill="#2d7cc4"/></g>
<path d="M479.1,138.4 L484.9,144.2 M484.9,138.4 L479.1,144.2" stroke="#1a1a1a" stroke-width="1.5" fill="none"/>
<g transform="translate(502.0,141.3) scale(1)"><rect x="-4.2" y="-4" width="7" height="8" fill="#eaf3fb" stroke="#2d7cc4" stroke-width="1"/><rect x="-1.5" y="-1" width="5.5" height="5" fill="#4a9ad8" stroke="#1f5f9f" stroke-width="0.7"/><rect x="-2.8" y="-2.6" width="3" height="1.2" fill="#2d7cc4"/></g>
<path d="M580.6,138.4 L586.4,144.2 M586.4,138.4 L580.6,144.2" stroke="#1a1a1a" stroke-width="1.5" fill="none"/>
<g transform="translate(605.5,141.3) scale(1)"><rect x="-4.2" y="-4" width="7" height="8" fill="#eaf3fb" stroke="#2d7cc4" stroke-width="1"/><rect x="-1.5" y="-1" width="5.5" height="5" fill="#4a9ad8" stroke="#1f5f9f" stroke-width="0.7"/><rect x="-2.8" y="-2.6" width="3" height="1.2" fill="#2d7cc4"/></g>
<path d="M699.6,138.4 L705.4,144.2 M705.4,138.4 L699.6,144.2" stroke="#1a1a1a" stroke-width="1.5" fill="none"/>
<g transform="translate(725.5,141.3) scale(1)"><rect x="-4.2" y="-4" width="7" height="8" fill="#eaf3fb" stroke="#2d7cc4" stroke-width="1"/><rect x="-1.5" y="-1" width="5.5" height="5" fill="#4a9ad8" stroke="#1f5f9f" stroke-width="0.7"/><rect x="-2.8" y="-2.6" width="3" height="1.2" fill="#2d7cc4"/></g>
<path d="M804.6,138.4 L810.4,144.2 M810.4,138.4 L804.6,144.2" stroke="#1a1a1a" stroke-width="1.5" fill="none"/>
<g transform="translate(829.5,141.3) scale(1)"><rect x="-4.2" y="-4" width="7" height="8" fill="#eaf3fb" stroke="#2d7cc4" stroke-width="1"/><rect x="-1.5" y="-1" width="5.5" height="5" fill="#4a9ad8" stroke="#1f5f9f" stroke-width="0.7"/><rect x="-2.8" y="-2.6" width="3" height="1.2" fill="#2d7cc4"/></g>
<path d="M907.1,138.4 L912.9,144.2 M912.9,138.4 L907.1,144.2" stroke="#1a1a1a" stroke-width="1.5" fill="none"/>
<g transform="translate(933.5,141.3) scale(1)"><rect x="-4.2" y="-4" width="7" height="8" fill="#e4f0f8" stroke="#cfe4f0" stroke-width="1"/><rect x="-1.5" y="-1" width="5.5" height="5" fill="#9ccbe6" stroke="#e4f0f8" stroke-width="0.7"/><rect x="-4" y="-3.8" width="3.4" height="3" fill="#f4f9fc"/></g>
<path d="M1035.6,138.4 L1041.4,144.2 M1041.4,138.4 L1035.6,144.2" stroke="#ffffff" stroke-width="1.5" fill="none"/>
<polygon points="1134.5,141.3 1138.5,138 1138.5,144.6" fill="none" stroke="#444" stroke-width="0.9" stroke-linejoin="round"/>
<polygon points="1150.5,141.3 1146.5,138 1146.5,144.6" fill="none" stroke="#444" stroke-width="0.9" stroke-linejoin="round"/>
<polygon points="1157.0,140.3 1163.0,140.3 1160.0,143.2" fill="#222"/>
<path d="M1168.3,138.1 L1174.7,144.5 M1174.7,138.1 L1168.3,144.5" stroke="#111" stroke-width="1.6" fill="none"/>
<g transform="translate(11.0,160.0) scale(1)"><rect x="-6.5" y="-6.5" width="4" height="4" fill="#e8d24a" stroke="#8a7a1a" stroke-width="0.7"/><rect x="-6" y="-1.5" width="7" height="5" fill="#e8d24a" stroke="#8a7a1a" stroke-width="0.7"/><rect x="3" y="2.5" width="4.5" height="4.5" fill="#cfe4f6" stroke="#2d6cb4" stroke-width="0.9"/><path d="M-2.5,3.5 L-2.5,5 L3,5" fill="none" stroke="#555" stroke-width="0.8" stroke-linejoin="round" stroke-linecap="round"/></g>
<rect x="168.5" y="155.6" width="6.4" height="1.4" fill="#222"/>
<polygon points="168.5,159.0 174.9,159.0 171.7,161.9" fill="#222"/>
<path d="M182.1,156.7 L187.9,162.5 M187.9,156.7 L182.1,162.5" stroke="#222" stroke-width="1.4" fill="none"/>
<g transform="translate(186.0,178.4) scale(1)"><circle cx="1" cy="-1" r="2.7" fill="none" stroke="#555" stroke-width="1"/><line x1="-1" y1="1" x2="-3.8" y2="3.8" stroke="#555" stroke-width="1.3"/></g>
<polygon points="7.8,193.8 14.8,193.8 11.3,198.6" fill="#444"/>
<g transform="translate(24.7,196.0) scale(1)"><polygon points="-4.5,-1 -1,-5 4.5,-4 4.5,0 1.5,1.5 1.5,5 -4.5,4.5" fill="#9fd0ee" stroke="#3a7fb4" stroke-width="0.8" stroke-linejoin="round"/><path d="M-4.5,-1 L1.5,-0.5 L4.5,-4 M1.5,-0.5 L1.5,1.5 M-4.5,1.8 L1.5,2.2" fill="none" stroke="#3a7fb4" stroke-width="0.7" stroke-linejoin="round" stroke-linecap="round"/></g>
<g transform="translate(38.7,196.7) scale(1)"><rect x="-3.6" y="-1.8" width="5.6" height="5.6" fill="none" stroke="#6a6a6a" stroke-width="0.9"/><rect x="-1.6" y="0.2" width="1.6" height="1.6" fill="#8a8a8a"/><path d="M0.5,-3.8 L3.8,-3.8 L3.8,-0.5" fill="none" stroke="#6a6a6a" stroke-width="0.9" stroke-linejoin="round" stroke-linecap="round"/></g>
<polygon points="25.6,205.0 30.2,208.4 25.6,211.8" fill="#555"/>
<g transform="translate(39.6,208.4) scale(1)"><path d="M-5.2,0 Q0,-6.4 5.2,0 Q0,6.4 -5.2,0 Z" fill="#ffffff" stroke="#2b2b2b" stroke-width="1" stroke-linejoin="round" stroke-linecap="round"/><circle cx="0" cy="0" r="2.1" fill="#2b2b2b"/></g>
<g transform="translate(54.0,208.7) scale(1)"><rect x="-4.8" y="-4.8" width="9.6" height="9.6" fill="none" stroke="#4a4a4a" stroke-width="0.9"/><rect x="-2.5" y="-5.6" width="5" height="1.8" fill="#fff"/><rect x="-2.5" y="3.8" width="5" height="1.8" fill="#fff"/><rect x="-5.6" y="-2.5" width="1.8" height="5" fill="#fff"/><rect x="3.8" y="-2.5" width="1.8" height="5" fill="#fff"/><line x1="-2.5" y1="2.5" x2="3" y2="-3" stroke="#6a6a6a" stroke-width="0.9"/></g>
<polygon points="25.6,217.5 30.2,220.9 25.6,224.3" fill="#555"/>
<g transform="translate(39.6,220.9) scale(1)"><path d="M-5.2,0 Q0,-6.4 5.2,0 Q0,6.4 -5.2,0 Z" fill="#ffffff" stroke="#8a8a8a" stroke-width="1" stroke-linejoin="round" stroke-linecap="round"/><circle cx="0" cy="0" r="2.1" fill="#8a8a8a"/><line x1="-3.5" y1="3.5" x2="3.5" y2="-3.5" stroke="#8a8a8a" stroke-width="1"/></g>
<g transform="translate(54.0,220.7) scale(1)"><path d="M-4.8,3 L-4.8,-4.8 L4.8,-4.8 L4.8,4.8 L-1,4.8" fill="none" stroke="#4a4a4a" stroke-width="0.9" stroke-linejoin="round" stroke-linecap="round"/><rect x="-5.3" y="2.6" width="3.4" height="2.8" fill="none" stroke="#3a3a3a" stroke-width="0.9"/></g>
<g transform="translate(39.6,233.5) scale(1)"><path d="M-5.2,0 Q0,-6.4 5.2,0 Q0,6.4 -5.2,0 Z" fill="#ffffff" stroke="#2b2b2b" stroke-width="1" stroke-linejoin="round" stroke-linecap="round"/><circle cx="0" cy="0" r="2.1" fill="#2b2b2b"/></g>
<g transform="translate(54.7,233.0) scale(1)"><g transform="scale(0.78)"><polygon points="0,-7 6,-4 0,-1 -6,-4" fill="#fbbd6a"/><polygon points="-6,-4 0,-1 0,7 -6,4" fill="#f39221"/><polygon points="0,-1 6,-4 6,4 0,7" fill="#dd7a14"/></g></g>
<g transform="translate(68.0,233.7) scale(1)"><rect x="-3.6" y="-1.8" width="5.6" height="5.6" fill="none" stroke="#6a6a6a" stroke-width="0.9"/><rect x="-1.6" y="0.2" width="1.6" height="1.6" fill="#8a8a8a"/><path d="M0.5,-3.8 L3.8,-3.8 L3.8,-0.5" fill="none" stroke="#6a6a6a" stroke-width="0.9" stroke-linejoin="round" stroke-linecap="round"/></g>
<g transform="translate(39.6,246.0) scale(1)"><path d="M-5.2,0 Q0,-6.4 5.2,0 Q0,6.4 -5.2,0 Z" fill="#ffffff" stroke="#2b2b2b" stroke-width="1" stroke-linejoin="round" stroke-linecap="round"/><circle cx="0" cy="0" r="2.1" fill="#2b2b2b"/></g>
<g transform="translate(54.7,245.5) scale(1)"><g transform="scale(0.78)"><polygon points="0,-7 6,-4 0,-1 -6,-4" fill="#fbbd6a"/><polygon points="-6,-4 0,-1 0,7 -6,4" fill="#f39221"/><polygon points="0,-1 6,-4 6,4 0,7" fill="#dd7a14"/></g></g>
<g transform="translate(68.0,246.2) scale(1)"><rect x="-3.6" y="-1.8" width="5.6" height="5.6" fill="none" stroke="#6a6a6a" stroke-width="0.9"/><rect x="-1.6" y="0.2" width="1.6" height="1.6" fill="#8a8a8a"/><path d="M0.5,-3.8 L3.8,-3.8 L3.8,-0.5" fill="none" stroke="#6a6a6a" stroke-width="0.9" stroke-linejoin="round" stroke-linecap="round"/></g>
<g transform="translate(39.6,258.5) scale(1)"><path d="M-5.2,0 Q0,-6.4 5.2,0 Q0,6.4 -5.2,0 Z" fill="#ffffff" stroke="#2b2b2b" stroke-width="1" stroke-linejoin="round" stroke-linecap="round"/><circle cx="0" cy="0" r="2.1" fill="#2b2b2b"/></g>
<g transform="translate(54.7,258.0) scale(1)"><g transform="scale(0.78)"><polygon points="0,-7 6,-4 0,-1 -6,-4" fill="#fbbd6a"/><polygon points="-6,-4 0,-1 0,7 -6,4" fill="#f39221"/><polygon points="0,-1 6,-4 6,4 0,7" fill="#dd7a14"/></g></g>
<g transform="translate(68.0,258.7) scale(1)"><rect x="-3.6" y="-1.8" width="5.6" height="5.6" fill="none" stroke="#6a6a6a" stroke-width="0.9"/><rect x="-1.6" y="0.2" width="1.6" height="1.6" fill="#8a8a8a"/><path d="M0.5,-3.8 L3.8,-3.8 L3.8,-0.5" fill="none" stroke="#6a6a6a" stroke-width="0.9" stroke-linejoin="round" stroke-linecap="round"/></g>
<g transform="translate(39.6,271.0) scale(1)"><path d="M-5.2,0 Q0,-6.4 5.2,0 Q0,6.4 -5.2,0 Z" fill="#ffffff" stroke="#2b2b2b" stroke-width="1" stroke-linejoin="round" stroke-linecap="round"/><circle cx="0" cy="0" r="2.1" fill="#2b2b2b"/></g>
<g transform="translate(54.7,270.5) scale(1)"><g transform="scale(0.78)"><polygon points="0,-7 6,-4 0,-1 -6,-4" fill="#fbbd6a"/><polygon points="-6,-4 0,-1 0,7 -6,4" fill="#f39221"/><polygon points="0,-1 6,-4 6,4 0,7" fill="#dd7a14"/></g></g>
<g transform="translate(68.0,271.2) scale(1)"><rect x="-3.6" y="-1.8" width="5.6" height="5.6" fill="none" stroke="#6a6a6a" stroke-width="0.9"/><rect x="-1.6" y="0.2" width="1.6" height="1.6" fill="#8a8a8a"/><path d="M0.5,-3.8 L3.8,-3.8 L3.8,-0.5" fill="none" stroke="#6a6a6a" stroke-width="0.9" stroke-linejoin="round" stroke-linecap="round"/></g>
<g transform="translate(39.6,283.5) scale(1)"><path d="M-5.2,0 Q0,-6.4 5.2,0 Q0,6.4 -5.2,0 Z" fill="#ffffff" stroke="#2b2b2b" stroke-width="1" stroke-linejoin="round" stroke-linecap="round"/><circle cx="0" cy="0" r="2.1" fill="#2b2b2b"/></g>
<g transform="translate(54.7,283.0) scale(1)"><g transform="scale(0.68)"><polygon points="0,-7 6,-4 0,-1 -6,-4" fill="#fbbd6a"/><polygon points="-6,-4 0,-1 0,7 -6,4" fill="#f39221"/><polygon points="0,-1 6,-4 6,4 0,7" fill="#dd7a14"/></g><path d="M-2.5,-5.6 A6,6 0 0 0 -2,5.6" fill="none" stroke="#a9cfe2" stroke-width="0.9" stroke-linejoin="round" stroke-linecap="round"/><path d="M2.5,-5.6 A6,6 0 0 1 4.5,-3" fill="none" stroke="#a9cfe2" stroke-width="0.9" stroke-linejoin="round" stroke-linecap="round"/></g>
<g transform="translate(68.0,283.7) scale(1)"><rect x="-3.6" y="-1.8" width="5.6" height="5.6" fill="none" stroke="#6a6a6a" stroke-width="0.9"/><rect x="-1.6" y="0.2" width="1.6" height="1.6" fill="#8a8a8a"/><path d="M0.5,-3.8 L3.8,-3.8 L3.8,-0.5" fill="none" stroke="#6a6a6a" stroke-width="0.9" stroke-linejoin="round" stroke-linecap="round"/></g>
<g transform="translate(39.6,296.0) scale(1)"><path d="M-5.2,0 Q0,-6.4 5.2,0 Q0,6.4 -5.2,0 Z" fill="#ffffff" stroke="#2b2b2b" stroke-width="1" stroke-linejoin="round" stroke-linecap="round"/><circle cx="0" cy="0" r="2.1" fill="#2b2b2b"/></g>
<g transform="translate(54.7,295.5) scale(1)"><g transform="scale(0.68)"><polygon points="0,-7 6,-4 0,-1 -6,-4" fill="#fbbd6a"/><polygon points="-6,-4 0,-1 0,7 -6,4" fill="#f39221"/><polygon points="0,-1 6,-4 6,4 0,7" fill="#dd7a14"/></g><path d="M-2.5,-5.6 A6,6 0 0 0 -2,5.6" fill="none" stroke="#a9cfe2" stroke-width="0.9" stroke-linejoin="round" stroke-linecap="round"/><path d="M2.5,-5.6 A6,6 0 0 1 4.5,-3" fill="none" stroke="#a9cfe2" stroke-width="0.9" stroke-linejoin="round" stroke-linecap="round"/></g>
<g transform="translate(68.0,296.2) scale(1)"><rect x="-3.6" y="-1.8" width="5.6" height="5.6" fill="none" stroke="#6a6a6a" stroke-width="0.9"/><rect x="-1.6" y="0.2" width="1.6" height="1.6" fill="#8a8a8a"/><path d="M0.5,-3.8 L3.8,-3.8 L3.8,-0.5" fill="none" stroke="#6a6a6a" stroke-width="0.9" stroke-linejoin="round" stroke-linecap="round"/></g>
<g transform="translate(39.6,308.5) scale(1)"><path d="M-5.2,0 Q0,-6.4 5.2,0 Q0,6.4 -5.2,0 Z" fill="#ffffff" stroke="#2b2b2b" stroke-width="1" stroke-linejoin="round" stroke-linecap="round"/><circle cx="0" cy="0" r="2.1" fill="#2b2b2b"/></g>
<g transform="translate(54.7,308.0) scale(1)"><g transform="scale(0.78)"><polygon points="0,-7 6,-4 0,-1 -6,-4" fill="#fbbd6a"/><polygon points="-6,-4 0,-1 0,7 -6,4" fill="#f39221"/><polygon points="0,-1 6,-4 6,4 0,7" fill="#dd7a14"/></g></g>
<g transform="translate(68.0,308.7) scale(1)"><rect x="-3.6" y="-1.8" width="5.6" height="5.6" fill="none" stroke="#6a6a6a" stroke-width="0.9"/><rect x="-1.6" y="0.2" width="1.6" height="1.6" fill="#8a8a8a"/><path d="M0.5,-3.8 L3.8,-3.8 L3.8,-0.5" fill="none" stroke="#6a6a6a" stroke-width="0.9" stroke-linejoin="round" stroke-linecap="round"/></g>
<g transform="translate(39.6,321.0) scale(1)"><path d="M-5.2,0 Q0,-6.4 5.2,0 Q0,6.4 -5.2,0 Z" fill="#ffffff" stroke="#2b2b2b" stroke-width="1" stroke-linejoin="round" stroke-linecap="round"/><circle cx="0" cy="0" r="2.1" fill="#2b2b2b"/></g>
<g transform="translate(54.7,320.5) scale(1)"><g transform="scale(0.68)"><polygon points="0,-7 6,-4 0,-1 -6,-4" fill="#fbbd6a"/><polygon points="-6,-4 0,-1 0,7 -6,4" fill="#f39221"/><polygon points="0,-1 6,-4 6,4 0,7" fill="#dd7a14"/></g><path d="M-2.5,-5.6 A6,6 0 0 0 -2,5.6" fill="none" stroke="#a9cfe2" stroke-width="0.9" stroke-linejoin="round" stroke-linecap="round"/><path d="M2.5,-5.6 A6,6 0 0 1 4.5,-3" fill="none" stroke="#a9cfe2" stroke-width="0.9" stroke-linejoin="round" stroke-linecap="round"/></g>
<g transform="translate(68.0,321.2) scale(1)"><rect x="-3.6" y="-1.8" width="5.6" height="5.6" fill="none" stroke="#6a6a6a" stroke-width="0.9"/><rect x="-1.6" y="0.2" width="1.6" height="1.6" fill="#8a8a8a"/><path d="M0.5,-3.8 L3.8,-3.8 L3.8,-0.5" fill="none" stroke="#6a6a6a" stroke-width="0.9" stroke-linejoin="round" stroke-linecap="round"/></g>
<g transform="translate(39.6,333.5) scale(1)"><path d="M-5.2,0 Q0,-6.4 5.2,0 Q0,6.4 -5.2,0 Z" fill="#ffffff" stroke="#2b2b2b" stroke-width="1" stroke-linejoin="round" stroke-linecap="round"/><circle cx="0" cy="0" r="2.1" fill="#2b2b2b"/></g>
<g transform="translate(54.7,333.0) scale(1)"><g transform="scale(0.68)"><polygon points="0,-7 6,-4 0,-1 -6,-4" fill="#fbbd6a"/><polygon points="-6,-4 0,-1 0,7 -6,4" fill="#f39221"/><polygon points="0,-1 6,-4 6,4 0,7" fill="#dd7a14"/></g><path d="M-2.5,-5.6 A6,6 0 0 0 -2,5.6" fill="none" stroke="#a9cfe2" stroke-width="0.9" stroke-linejoin="round" stroke-linecap="round"/><path d="M2.5,-5.6 A6,6 0 0 1 4.5,-3" fill="none" stroke="#a9cfe2" stroke-width="0.9" stroke-linejoin="round" stroke-linecap="round"/></g>
<g transform="translate(68.0,333.7) scale(1)"><rect x="-3.6" y="-1.8" width="5.6" height="5.6" fill="none" stroke="#6a6a6a" stroke-width="0.9"/><rect x="-1.6" y="0.2" width="1.6" height="1.6" fill="#8a8a8a"/><path d="M0.5,-3.8 L3.8,-3.8 L3.8,-0.5" fill="none" stroke="#6a6a6a" stroke-width="0.9" stroke-linejoin="round" stroke-linecap="round"/></g>
<g transform="translate(39.6,346.0) scale(1)"><path d="M-5.2,0 Q0,-6.4 5.2,0 Q0,6.4 -5.2,0 Z" fill="#ffffff" stroke="#2b2b2b" stroke-width="1" stroke-linejoin="round" stroke-linecap="round"/><circle cx="0" cy="0" r="2.1" fill="#2b2b2b"/></g>
<g transform="translate(54.7,345.5) scale(1)"><g transform="scale(0.78)"><polygon points="0,-7 6,-4 0,-1 -6,-4" fill="#fbbd6a"/><polygon points="-6,-4 0,-1 0,7 -6,4" fill="#f39221"/><polygon points="0,-1 6,-4 6,4 0,7" fill="#dd7a14"/></g></g>
<g transform="translate(68.0,346.2) scale(1)"><rect x="-3.6" y="-1.8" width="5.6" height="5.6" fill="none" stroke="#6a6a6a" stroke-width="0.9"/><rect x="-1.6" y="0.2" width="1.6" height="1.6" fill="#8a8a8a"/><path d="M0.5,-3.8 L3.8,-3.8 L3.8,-0.5" fill="none" stroke="#6a6a6a" stroke-width="0.9" stroke-linejoin="round" stroke-linecap="round"/></g>
<g transform="translate(39.6,358.5) scale(1)"><path d="M-5.2,0 Q0,-6.4 5.2,0 Q0,6.4 -5.2,0 Z" fill="#ffffff" stroke="#2b2b2b" stroke-width="1" stroke-linejoin="round" stroke-linecap="round"/><circle cx="0" cy="0" r="2.1" fill="#2b2b2b"/></g>
<g transform="translate(54.7,358.0) scale(1)"><g transform="scale(0.68)"><polygon points="0,-7 6,-4 0,-1 -6,-4" fill="#fbbd6a"/><polygon points="-6,-4 0,-1 0,7 -6,4" fill="#f39221"/><polygon points="0,-1 6,-4 6,4 0,7" fill="#dd7a14"/></g><path d="M-2.5,-5.6 A6,6 0 0 0 -2,5.6" fill="none" stroke="#a9cfe2" stroke-width="0.9" stroke-linejoin="round" stroke-linecap="round"/><path d="M2.5,-5.6 A6,6 0 0 1 4.5,-3" fill="none" stroke="#a9cfe2" stroke-width="0.9" stroke-linejoin="round" stroke-linecap="round"/></g>
<g transform="translate(68.0,358.7) scale(1)"><rect x="-3.6" y="-1.8" width="5.6" height="5.6" fill="none" stroke="#6a6a6a" stroke-width="0.9"/><rect x="-1.6" y="0.2" width="1.6" height="1.6" fill="#8a8a8a"/><path d="M0.5,-3.8 L3.8,-3.8 L3.8,-0.5" fill="none" stroke="#6a6a6a" stroke-width="0.9" stroke-linejoin="round" stroke-linecap="round"/></g>
<g transform="translate(39.6,371.0) scale(1)"><path d="M-5.2,0 Q0,-6.4 5.2,0 Q0,6.4 -5.2,0 Z" fill="#ffffff" stroke="#2b2b2b" stroke-width="1" stroke-linejoin="round" stroke-linecap="round"/><circle cx="0" cy="0" r="2.1" fill="#2b2b2b"/></g>
<g transform="translate(54.7,370.5) scale(1)"><g transform="scale(0.68)"><polygon points="0,-7 6,-4 0,-1 -6,-4" fill="#fbbd6a"/><polygon points="-6,-4 0,-1 0,7 -6,4" fill="#f39221"/><polygon points="0,-1 6,-4 6,4 0,7" fill="#dd7a14"/></g><path d="M-2.5,-5.6 A6,6 0 0 0 -2,5.6" fill="none" stroke="#a9cfe2" stroke-width="0.9" stroke-linejoin="round" stroke-linecap="round"/><path d="M2.5,-5.6 A6,6 0 0 1 4.5,-3" fill="none" stroke="#a9cfe2" stroke-width="0.9" stroke-linejoin="round" stroke-linecap="round"/></g>
<g transform="translate(68.0,371.2) scale(1)"><rect x="-3.6" y="-1.8" width="5.6" height="5.6" fill="none" stroke="#6a6a6a" stroke-width="0.9"/><rect x="-1.6" y="0.2" width="1.6" height="1.6" fill="#8a8a8a"/><path d="M0.5,-3.8 L3.8,-3.8 L3.8,-0.5" fill="none" stroke="#6a6a6a" stroke-width="0.9" stroke-linejoin="round" stroke-linecap="round"/></g>
<g transform="translate(39.6,383.5) scale(1)"><path d="M-5.2,0 Q0,-6.4 5.2,0 Q0,6.4 -5.2,0 Z" fill="#ffffff" stroke="#2b2b2b" stroke-width="1" stroke-linejoin="round" stroke-linecap="round"/><circle cx="0" cy="0" r="2.1" fill="#2b2b2b"/></g>
<g transform="translate(54.7,383.0) scale(1)"><g transform="scale(0.78)"><polygon points="0,-7 6,-4 0,-1 -6,-4" fill="#fbbd6a"/><polygon points="-6,-4 0,-1 0,7 -6,4" fill="#f39221"/><polygon points="0,-1 6,-4 6,4 0,7" fill="#dd7a14"/></g></g>
<g transform="translate(68.0,383.7) scale(1)"><rect x="-3.6" y="-1.8" width="5.6" height="5.6" fill="none" stroke="#6a6a6a" stroke-width="0.9"/><rect x="-1.6" y="0.2" width="1.6" height="1.6" fill="#8a8a8a"/><path d="M0.5,-3.8 L3.8,-3.8 L3.8,-0.5" fill="none" stroke="#6a6a6a" stroke-width="0.9" stroke-linejoin="round" stroke-linecap="round"/></g>
<g transform="translate(39.6,396.0) scale(1)"><path d="M-5.2,0 Q0,-6.4 5.2,0 Q0,6.4 -5.2,0 Z" fill="#ffffff" stroke="#2b2b2b" stroke-width="1" stroke-linejoin="round" stroke-linecap="round"/><circle cx="0" cy="0" r="2.1" fill="#2b2b2b"/></g>
<g transform="translate(54.7,395.5) scale(1)"><g transform="scale(0.68)"><polygon points="0,-7 6,-4 0,-1 -6,-4" fill="#fbbd6a"/><polygon points="-6,-4 0,-1 0,7 -6,4" fill="#f39221"/><polygon points="0,-1 6,-4 6,4 0,7" fill="#dd7a14"/></g><path d="M-2.5,-5.6 A6,6 0 0 0 -2,5.6" fill="none" stroke="#a9cfe2" stroke-width="0.9" stroke-linejoin="round" stroke-linecap="round"/><path d="M2.5,-5.6 A6,6 0 0 1 4.5,-3" fill="none" stroke="#a9cfe2" stroke-width="0.9" stroke-linejoin="round" stroke-linecap="round"/></g>
<g transform="translate(68.0,396.2) scale(1)"><rect x="-3.6" y="-1.8" width="5.6" height="5.6" fill="none" stroke="#6a6a6a" stroke-width="0.9"/><rect x="-1.6" y="0.2" width="1.6" height="1.6" fill="#8a8a8a"/><path d="M0.5,-3.8 L3.8,-3.8 L3.8,-0.5" fill="none" stroke="#6a6a6a" stroke-width="0.9" stroke-linejoin="round" stroke-linecap="round"/></g>
<g transform="translate(39.6,408.5) scale(1)"><path d="M-5.2,0 Q0,-6.4 5.2,0 Q0,6.4 -5.2,0 Z" fill="#ffffff" stroke="#2b2b2b" stroke-width="1" stroke-linejoin="round" stroke-linecap="round"/><circle cx="0" cy="0" r="2.1" fill="#2b2b2b"/></g>
<g transform="translate(54.7,408.0) scale(1)"><g transform="scale(0.68)"><polygon points="0,-7 6,-4 0,-1 -6,-4" fill="#fbbd6a"/><polygon points="-6,-4 0,-1 0,7 -6,4" fill="#f39221"/><polygon points="0,-1 6,-4 6,4 0,7" fill="#dd7a14"/></g><path d="M-2.5,-5.6 A6,6 0 0 0 -2,5.6" fill="none" stroke="#a9cfe2" stroke-width="0.9" stroke-linejoin="round" stroke-linecap="round"/><path d="M2.5,-5.6 A6,6 0 0 1 4.5,-3" fill="none" stroke="#a9cfe2" stroke-width="0.9" stroke-linejoin="round" stroke-linecap="round"/></g>
<g transform="translate(68.0,408.7) scale(1)"><rect x="-3.6" y="-1.8" width="5.6" height="5.6" fill="none" stroke="#6a6a6a" stroke-width="0.9"/><rect x="-1.6" y="0.2" width="1.6" height="1.6" fill="#8a8a8a"/><path d="M0.5,-3.8 L3.8,-3.8 L3.8,-0.5" fill="none" stroke="#6a6a6a" stroke-width="0.9" stroke-linejoin="round" stroke-linecap="round"/></g>
<polygon points="25.6,417.5 30.2,420.9 25.6,424.3" fill="#555"/>
<g transform="translate(40.0,420.9) scale(1)"><polygon points="-4.5,4 -1.5,-4.5 -1.5,4" fill="none" stroke="#5a5a5a" stroke-width="0.9" stroke-linejoin="round"/><polygon points="4.5,4 1.5,-4.5 1.5,4" fill="none" stroke="#5a5a5a" stroke-width="0.9" stroke-linejoin="round"/></g>
<g transform="translate(1189.7,123.8) scale(1)"><rect x="-6" y="-6" width="8" height="12" fill="#3a86d4" stroke="#1f5fa4" stroke-width="0.8"/><rect x="-1" y="-1" width="7.5" height="7" fill="#9ccbf0" stroke="#1f5fa4" stroke-width="0.8"/><line x1="-4" y1="-6" x2="-4" y2="6" stroke="#bfe0f8" stroke-width="1"/></g>
<g transform="translate(1189.7,149.5) scale(1)"><rect x="-6" y="0" width="4" height="4" fill="#c9a43a" stroke="#6a5a1a" stroke-width="0.6"/><rect x="-2" y="-3" width="4" height="4" fill="#7a9a3a" stroke="#3a4a1a" stroke-width="0.6"/><rect x="2" y="-6" width="4" height="4" fill="#4a4a4a"/><rect x="-2" y="2" width="4" height="4" fill="#e0c04a" stroke="#6a5a1a" stroke-width="0.6"/><rect x="2" y="-1" width="4" height="4" fill="#8a8a5a" stroke="#4a4a2a" stroke-width="0.6"/></g>
<g transform="translate(1189.7,176.5) scale(1)"><rect x="-6.5" y="-5.5" width="13" height="11" fill="#f2f7fc" stroke="#2f6fb0" stroke-width="1.2"/><rect x="-6.5" y="-5.5" width="13" height="2.6" fill="#2f6fb0"/><text x="0" y="4.6" font-family="Liberation Sans,sans-serif" font-size="8.5" font-weight="bold" fill="#2f6fb0" text-anchor="middle">?</text></g>
<g transform="translate(1189.7,204.3) scale(1)"><rect x="-6.5" y="-5.5" width="13" height="11" fill="#f4f4f4" stroke="#4a4a6a" stroke-width="1"/><path d="M-5,4 A5,5 0 0 1 5,4 Z" fill="#fff" stroke="#555" stroke-width="0.6" stroke-linejoin="round" stroke-linecap="round"/><polygon points="-5.5,-4.5 -1,-4.5 -3,0" fill="#d0342a"/><polygon points="5.5,-4.5 1,-4.5 3,0" fill="#3a9a3a"/><line x1="0" y1="4" x2="3" y2="-1" stroke="#333" stroke-width="0.9"/></g>
<g transform="translate(1189.7,231.2) scale(1)"><rect x="-6.5" y="-5.5" width="13" height="11" fill="#eaf1fa" stroke="#3a6ab0" stroke-width="1.3"/><circle cx="-2.5" cy="-1.8" r="1.5" fill="#e0b030"/><circle cx="2.5" cy="-1.8" r="1.5" fill="#8a8a8a"/><circle cx="-2.5" cy="2.4" r="1.5" fill="#8a8a8a"/><circle cx="2.5" cy="2.4" r="1.5" fill="#e0b030"/></g>
<defs><linearGradient id="gHeat" x1="0" y1="0" x2="1" y2="1"><stop offset="0" stop-color="#2a2f9a"/><stop offset="0.45" stop-color="#3a4ab8"/><stop offset="0.7" stop-color="#e0452a"/><stop offset="1" stop-color="#f2c52a"/></linearGradient></defs>
<g transform="translate(1189.7,257.4) scale(1)"><rect x="-5.5" y="-5.5" width="11" height="11" fill="url(#gHeat)" stroke="#2a2f7a" stroke-width="0.8"/></g>
<g transform="translate(1189.7,285.6) scale(1)"><circle cx="2.5" cy="-2.5" r="2.6" fill="none" stroke="#cfcfcf" stroke-width="1.4"/><line x1="0.5" y1="-0.5" x2="-4.5" y2="4.5" stroke="#cfcfcf" stroke-width="1.8"/></g>
<g transform="translate(1189.7,312.0) scale(1)"><rect x="-6" y="-3.5" width="11" height="8" fill="#eaf2fa" stroke="#2f6fb0" stroke-width="1.1"/><rect x="-4" y="-5.5" width="11" height="8" fill="none" stroke="#5a8fc8" stroke-width="0.9"/><circle cx="-0.5" cy="0.5" r="2" fill="none" stroke="#2f6fb0" stroke-width="0.9"/></g>
<g transform="translate(1189.7,337.5) scale(1)"><rect x="-6.5" y="-6.5" width="13" height="13" fill="none" stroke="#2f5fa8" stroke-width="0.9"/><circle cx="0" cy="0" r="4.2" fill="#3a7fd0" stroke="#1f4f94" stroke-width="0.8"/><circle cx="0" cy="0" r="1.6" fill="#eaf2fa"/><path d="M0,-6 L0,-4 M0,4 L0,6 M-6,0 L-4,0 M4,0 L6,0" fill="none" stroke="#1f4f94" stroke-width="1.4" stroke-linejoin="round" stroke-linecap="round"/></g>
<g transform="translate(1189.7,365.3) scale(1)"><rect x="-6" y="-6.5" width="3.5" height="3.5" fill="none" stroke="#7a7a7a" stroke-width="0.9"/><rect x="2.5" y="2.5" width="3.5" height="3.5" fill="none" stroke="#7a7a7a" stroke-width="0.9"/><rect x="-6" y="3" width="3.5" height="3.5" fill="none" stroke="#9a9a9a" stroke-width="0.9"/><path d="M-4.2,-3 L-4.2,3 M-4.2,0 L2.5,4" fill="none" stroke="#7a7a7a" stroke-width="0.9" stroke-linejoin="round" stroke-linecap="round"/></g>
<g transform="translate(873.6,629.6) scale(1)"><rect x="-5.5" y="-5" width="11" height="10" fill="#f3f5f6" stroke="#d8dde0" stroke-width="0.6"/><circle cx="0.5" cy="-0.5" r="2.6" fill="none" stroke="#444" stroke-width="0.9"/><line x1="-1.3" y1="1.3" x2="-3.6" y2="3.6" stroke="#c9822a" stroke-width="1.3"/><rect x="-5.5" y="-5" width="11" height="1.8" fill="#c9ccd0"/></g>
<g transform="translate(891.2,629.6) scale(1)"><circle cx="1.2" cy="-1.5" r="3.4" fill="#f7f7f7" stroke="#e8ecee" stroke-width="1"/><line x1="-1" y1="1" x2="-4.5" y2="4.8" stroke="#f2f2f2" stroke-width="2"/><circle cx="1.2" cy="-1.5" r="1.2" fill="#d9a04a"/></g>
<g transform="translate(908.7,629.6) scale(1)"><rect x="-5.5" y="-5" width="11" height="10" fill="#f3f5f6" stroke="#d8dde0" stroke-width="0.6"/><path d="M-1.5,-1.5 L-3.8,-3.5 M1.5,-1.5 L3.8,-3.5 M-1.5,1.5 L-3.8,3.5 M1.5,1.5 L3.8,3.5" fill="none" stroke="#333" stroke-width="0.9" stroke-linejoin="round" stroke-linecap="round"/><rect x="-1" y="-1" width="2" height="2" fill="#555"/></g>
<g transform="translate(926.6,629.6) scale(1)"><rect x="-5.5" y="-5" width="11" height="10" fill="#f3f5f6" stroke="#d8dde0" stroke-width="0.6"/><ellipse cx="0" cy="0.5" rx="3.6" ry="2.4" fill="none" stroke="#444" stroke-width="0.9"/><path d="M-3.6,-2 L3.6,-2" fill="none" stroke="#444" stroke-width="0.9" stroke-linejoin="round" stroke-linecap="round"/><line x1="0" y1="-4" x2="0" y2="-2" stroke="#444" stroke-width="0.8"/></g>
<g transform="translate(944.1,629.6) scale(1)"><rect x="-5.5" y="-5" width="11" height="10" fill="#f3f5f6" stroke="#d8dde0" stroke-width="0.6"/><path d="M-2.6,0.5 A2.8,2.8 0 1 0 0,-2.4" fill="none" stroke="#333" stroke-width="1" stroke-linejoin="round" stroke-linecap="round"/><polygon points="-0.3,-4.4 2.2,-2.4 -0.3,-0.6" fill="#333"/></g>
<g transform="translate(961.4,629.6) scale(1)"><path d="M-5,0 L4,0 M-0.5,-4.5 L-0.5,4.5" fill="none" stroke="#f2f2f2" stroke-width="1.8" stroke-linejoin="round" stroke-linecap="round"/><polygon points="-6.5,0 -3.5,-2.6 -3.5,2.6" fill="#f7f7f7"/><polygon points="-0.5,-6 -3,-3.2 2,-3.2" fill="#f7f7f7"/><rect x="1" y="2" width="4" height="3" fill="#b07a4a"/></g>
<g transform="translate(977.6,629.6) scale(1)"><rect x="-5.5" y="-5" width="11" height="10" fill="#c9d44a" stroke="#8aa02a" stroke-width="0.6"/><rect x="-4.5" y="-3.5" width="6" height="6" fill="#5aa84a" stroke="#2f6f2a" stroke-width="0.6"/><rect x="-0.5" y="0" width="5" height="4" fill="#e8d84a"/></g>
<g transform="translate(996.0,630.1) scale(1)"><rect x="-6" y="-6" width="7.5" height="7.5" fill="#3b7dd8" stroke="#e8f0fa" stroke-width="0.9"/><rect x="-1.5" y="-1.5" width="7.5" height="7.5" fill="#f0c93a" stroke="#b8962a" stroke-width="0.6"/></g>
<g transform="translate(1014.4,629.6) scale(1)"><g transform="scale(0.75)"><polygon points="0,-7 6,-4 0,-1 -6,-4" fill="#f0b060"/><polygon points="-6,-4 0,-1 0,7 -6,4" fill="#d9822a"/><polygon points="0,-1 6,-4 6,4 0,7" fill="#a85a12"/></g><rect x="-6" y="-6" width="3.5" height="3.5" fill="#c0392b"/></g>
<g transform="translate(1030.0,629.6) scale(1)"><circle cx="0" cy="0" r="5" fill="#eef0f1" stroke="#cfd4d7" stroke-width="0.6"/><rect x="-2.6" y="-0.7" width="5.2" height="1.4" fill="#e8a04a"/></g>
<line x1="1039" y1="629.6" x2="1127.5" y2="629.6" stroke="#f4f8fa" stroke-width="1.1"/>
<g transform="translate(1082.4,629.1) scale(1)"><rect x="-1.8" y="-3.8" width="3.6" height="6" fill="#eef2f4" stroke="#8aa0ac" stroke-width="0.6"/><polygon points="-1.8,2.2 1.8,2.2 0,4.2" fill="#eef2f4"/></g>
<g transform="translate(1134.2,629.6) scale(1)"><circle cx="0" cy="0" r="5" fill="#eef0f1" stroke="#cfd4d7" stroke-width="0.6"/><rect x="-2.6" y="-0.7" width="5.2" height="1.4" fill="#e8a04a"/><rect x="-0.7" y="-2.6" width="1.4" height="5.2" fill="#e8a04a"/></g>
<g transform="translate(1152.6,630.1) scale(1)"><rect x="-6" y="-4.2" width="12" height="8.4" fill="#e3201b" rx="2.4"/><polygon points="-1.6,-2.2 2.6,0 -1.6,2.2" fill="#ffffff"/></g>
<g transform="translate(1171.6,630.1) scale(1)"><circle cx="0" cy="0" r="5.2" fill="#f4f4f4" stroke="#d9d9d9" stroke-width="0.5"/><circle cx="0" cy="0" r="2.6" fill="#a01818"/></g>
<g transform="translate(1190.0,629.9) scale(1)"><rect x="-4.5" y="-5.5" width="9" height="11" fill="#fbfbfb" stroke="#d9d9d9" stroke-width="0.5"/><rect x="-2" y="-1" width="4" height="4.5" fill="#d0342a"/><rect x="-3" y="3" width="6" height="1.2" fill="#d0342a"/></g>
<defs><linearGradient id="gWin" x1="0" y1="0" x2="1" y2="1"><stop offset="0" stop-color="#49b8f2"/><stop offset="1" stop-color="#0f6fd6"/></linearGradient></defs>
<g transform="translate(497.0,656.3) scale(1)"><rect x="-9" y="-9" width="8.5" height="8.5" fill="url(#gWin)"/><rect x="0.5" y="-9" width="8.5" height="8.5" fill="url(#gWin)"/><rect x="-9" y="0.5" width="8.5" height="8.5" fill="url(#gWin)"/><rect x="0.5" y="0.5" width="8.5" height="8.5" fill="url(#gWin)"/></g>
<g transform="translate(530.8,655.0) scale(1)"><circle cx="0" cy="0" r="6" fill="none" stroke="#1a1a1a" stroke-width="1.9"/><line x1="4.3" y1="4.3" x2="8" y2="8.6" stroke="#1a1a1a" stroke-width="2.2"/></g>
<g transform="translate(565.0,656.3) scale(1)"><rect x="-2.6" y="-9" width="13" height="12.4" fill="#f2f2f2" stroke="#d4d4d4" stroke-width="0.6" rx="1"/><rect x="-8.4" y="-3.4" width="13.5" height="12" fill="#262626" rx="1"/><rect x="-2.6" y="-3.4" width="7.7" height="6.8" fill="#b9b9b9"/></g>
<g transform="translate(600.0,656.3) scale(1)"><circle cx="0" cy="0" r="9" fill="#7b6fdc"/><polygon points="-7.5,4 -8.5,9.5 -2.5,8" fill="#7b6fdc"/><rect x="-4.6" y="-3" width="6.4" height="6" fill="#ffffff" rx="1"/><polygon points="2.2,-0.8 5,-3 5,3 2.2,0.8" fill="#ffffff"/></g>
<g transform="translate(634.7,656.3) scale(1)"><circle cx="0" cy="0" r="9" fill="#ea4335"/><path d="M0,0 L-7.8,-4.5 A9,9 0 0 0 0.0,9 Z" fill="#34a853"/><path d="M0,0 L0,9 A9,9 0 0 0 7.8,-4.5 Z" fill="#fbbc05"/><path d="M0,0 L7.8,-4.5 A9,9 0 0 0 -7.8,-4.5 Z" fill="#ea4335"/><path d="M-7.8,-4.5 A9,9 0 0 0 -3.5,8.3 L0.5,1 Z" fill="#34a853"/><circle cx="0" cy="0" r="4.1" fill="#ffffff"/><circle cx="0" cy="0" r="3.2" fill="#4285f4"/></g>
<g transform="translate(669.6,656.6) scale(1)"><path d="M-9.5,-7.5 L-3.5,-7.5 L-1.5,-5.5 L9.5,-5.5 L9.5,8 L-9.5,8 Z" fill="#f3b92f"/><rect x="-9.5" y="-3.8" width="19" height="11.8" fill="#fbd256" rx="1"/><rect x="-4.5" y="3.5" width="9" height="4.5" fill="#2f8fe0"/></g>
<rect x="667.5" y="669.3" width="3" height="1.2" fill="#7a7a7a"/>
<rect x="689.5" y="640.5" width="29" height="30.5" fill="#f6f8fc" stroke="#e6eaf3" stroke-width="0.8" rx="3"/>
<g transform="translate(705.5,656.6) scale(1)"><rect x="-7" y="-7" width="17.5" height="16.5" fill="#3c4aa8"/><rect x="-10" y="-9.5" width="18" height="17" fill="#27348b" stroke="#5a6ac8" stroke-width="0.6"/><text x="-1" y="2.5" font-family="Liberation Sans,sans-serif" font-size="8.5" font-weight="bold" fill="#ffffff" text-anchor="middle">SE</text></g>
<rect x="697.3" y="669.3" width="12.3" height="1.8" fill="#1a6fc9" rx="0.9"/>
<g transform="translate(990.3,656.2) scale(1)"><path d="M-4.5,2.2 L0,-2.2 L4.5,2.2" fill="none" stroke="#222" stroke-width="1.2" stroke-linejoin="round" stroke-linecap="round"/></g>
<g transform="translate(1008.7,655.7) scale(1)"><path d="M-5.4,-1 A5.6,5.6 0 0 1 4.6,-3.2 M5.4,1 A5.6,5.6 0 0 1 -4.6,3.2" fill="none" stroke="#222" stroke-width="1.2" stroke-linejoin="round" stroke-linecap="round"/><polygon points="5.8,-5.8 5.8,-2 2,-2.6" fill="#222"/><polygon points="-5.8,5.8 -5.8,2 -2,2.6" fill="#222"/><circle cx="3.8" cy="4" r="2.9" fill="#e81123"/></g>
<g transform="translate(1065.4,656.2) scale(1)"><circle cx="0" cy="0" r="5.8" fill="none" stroke="#222" stroke-width="1.1"/><ellipse cx="0" cy="0" rx="2.6" ry="5.8" fill="none" stroke="#222" stroke-width="0.9"/><line x1="-5.8" y1="0" x2="5.8" y2="0" stroke="#222" stroke-width="0.9"/><circle cx="3.4" cy="3.2" r="3.2" fill="#e9eef9" stroke="#222" stroke-width="1"/><line x1="1.4" y1="5.2" x2="5.4" y2="1.2" stroke="#222" stroke-width="1"/></g>
<g transform="translate(1083.8,655.7) scale(1)"><path d="M-6,-1.8 L-3.6,-1.8 L-0.6,-4.6 L-0.6,4.6 L-3.6,1.8 L-6,1.8 Z" fill="none" stroke="#222" stroke-width="1.1" stroke-linejoin="round" stroke-linecap="round"/><path d="M2.2,-2.4 L6.6,2.4 M6.6,-2.4 L2.2,2.4" fill="none" stroke="#222" stroke-width="1.1" stroke-linejoin="round" stroke-linecap="round"/></g>
<g transform="translate(1102.8,655.7) scale(1)"><rect x="-6.5" y="-3.6" width="11.6" height="7.2" fill="none" stroke="#222" stroke-width="1.1" rx="1.6"/><rect x="-4.8" y="-2" width="6.4" height="4" fill="#222"/><rect x="5.6" y="-1.3" width="1.4" height="2.6" fill="#222"/></g>
<g transform="translate(1178.7,656.2) scale(1)"><circle cx="0" cy="0" r="6.2" fill="#1a67c2"/><text x="0" y="2.9" font-family="Liberation Sans,sans-serif" font-size="8" fill="#ffffff" text-anchor="middle">2</text></g>
<g transform="translate(0.0,0.0) scale(1)"><polygon points="1127,542.5 1156.8,555.2 1155.4,588 1127.8,604.2 1100.9,589.7 1098.7,555.2" fill="#fbfbfb" stroke="#d2d2d2" stroke-width="0.9" stroke-linejoin="round"/><path d="M1098.7,555.2 L1127.8,571.6 L1156.8,555.2 M1127.8,571.6 L1127.8,604.2" fill="none" stroke="#d2d2d2" stroke-width="0.9" stroke-linejoin="round" stroke-linecap="round"/><polygon points="1127.8,571.6 1156.8,555.2 1155.4,588 1127.8,604.2" fill="#f1f1f1"/></g>
<text transform="translate(1103.5,580) rotate(26) skewX(26)" font-family="Liberation Sans,sans-serif" font-size="7.4" fill="#777">FRONT</text>
<text transform="translate(1133.3,587.5) rotate(-27) skewX(-27)" font-family="Liberation Sans,sans-serif" font-size="7.4" fill="#777">RIGHT</text>
<text transform="matrix(0.8,0.39,-0.8,0.39,1119.9,554.2)" font-family="Liberation Sans,sans-serif" font-size="7.6" fill="#777">TOP</text>
<line x1="1127.8" y1="571.6" x2="1139" y2="565" stroke="#52b86a" stroke-width="1"/><line x1="1127.8" y1="571.6" x2="1141" y2="581" stroke="#e86a6a" stroke-width="1"/><line x1="1127.8" y1="571.6" x2="1127.8" y2="560" stroke="#6a9ae8" stroke-width="1"/><circle cx="1127.8" cy="571.6" r="1.7" fill="#e8c53a" stroke="#a88a1a" stroke-width="0.5"/>
<g transform="translate(1048.0,332.5) scale(1)"><path d="M0,0 L0,10.5 L2.6,8.2 L4.6,12.6 L6.3,11.8 L4.4,7.6 L7.8,7.6 Z" fill="#f7f7f7" stroke="#5a5a5a" stroke-width="0.9" stroke-linejoin="round" stroke-linecap="round"/></g>
<rect x="1057.5" y="343" width="4.4" height="4.4" fill="#f0c84a" stroke="#c9a02a" stroke-width="0.6"/>
<g transform="translate(1067.4,361.5) scale(1)"><path d="M-9.5,-3 Q-9.5,-13 0,-13 Q9.5,-13 9.5,-3 L9.5,4 Q9.5,13 0,13 Q-9.5,13 -9.5,4 Z" fill="#f4f4f4" stroke="#5a5a5a" stroke-width="1" stroke-linejoin="round" stroke-linecap="round"/><path d="M-9.5,-2 Q0,2 9.5,-2" fill="none" stroke="#8a8a8a" stroke-width="0.8" stroke-linejoin="round" stroke-linecap="round"/><rect x="-2.2" y="-11" width="4.4" height="8.5" fill="#d9d9d9" stroke="#3a3a3a" stroke-width="1" rx="1"/><line x1="0" y1="-10" x2="0" y2="-3.5" stroke="#3a3a3a" stroke-width="1.2"/></g></svg>
</body></html>
